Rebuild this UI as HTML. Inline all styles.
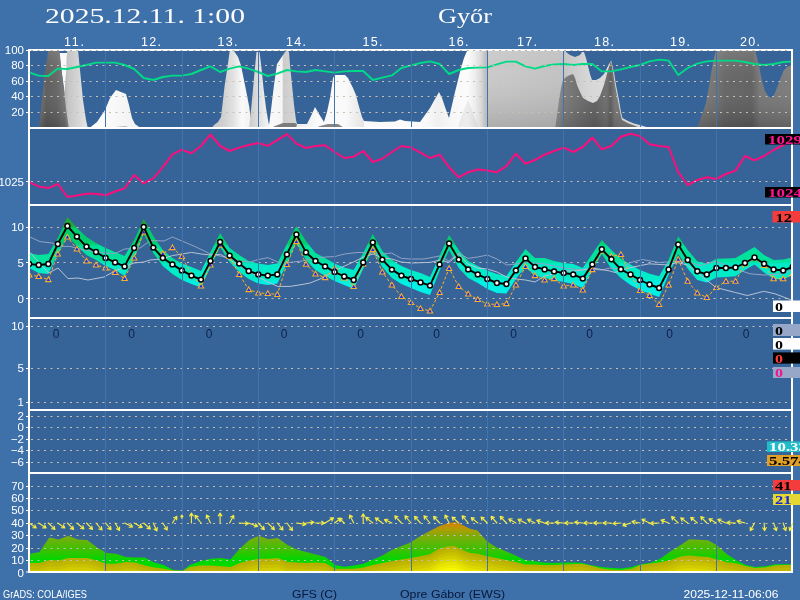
<!DOCTYPE html>
<html lang="hu"><head><meta charset="utf-8"><title>Győr meteogram</title>
<style>html,body{margin:0;padding:0;background:#3e70aa;overflow:hidden}svg{display:block}text{font-family:"Liberation Sans",sans-serif}.ser{font-family:"Liberation Serif",serif}</style>
</head><body>
<svg width="800" height="600" viewBox="0 0 800 600" style="will-change:transform">
<rect width="800" height="600" fill="#3e70aa"/>
<rect x="29" y="50" width="763" height="522" fill="#366498"/>
<defs>
<clipPath id="cp1"><rect x="30" y="51" width="761" height="77"/></clipPath>
<clipPath id="cp3"><rect x="30" y="206" width="761" height="112"/></clipPath>
<clipPath id="cp6"><rect x="30" y="474" width="761" height="97"/></clipPath>
</defs>
<line x1="31" y1="227.5" x2="790" y2="227.5" stroke="#c8c0b2" stroke-width="1" stroke-dasharray="2 4.5"/>
<line x1="26" y1="227.5" x2="29" y2="227.5" stroke="#fff" stroke-width="1"/>
<text x="24" y="231.2" font-size="11.5" fill="#fff" text-anchor="end">10</text>
<line x1="31" y1="262.5" x2="790" y2="262.5" stroke="#c8c0b2" stroke-width="1" stroke-dasharray="2 4.5"/>
<line x1="26" y1="262.5" x2="29" y2="262.5" stroke="#fff" stroke-width="1"/>
<text x="24" y="266.9" font-size="11.5" fill="#fff" text-anchor="end">5</text>
<line x1="31" y1="298.5" x2="790" y2="298.5" stroke="#c8c0b2" stroke-width="1" stroke-dasharray="2 4.5"/>
<line x1="26" y1="298.5" x2="29" y2="298.5" stroke="#fff" stroke-width="1"/>
<text x="24" y="302.6" font-size="11.5" fill="#fff" text-anchor="end">0</text>
<defs><linearGradient id="gv" gradientUnits="userSpaceOnUse" x1="0" y1="50" x2="0" y2="128"><stop offset="0" stop-color="#fff" stop-opacity="0.13"/><stop offset="0.45" stop-color="#888" stop-opacity="0"/><stop offset="1" stop-color="#000" stop-opacity="0.24"/></linearGradient><linearGradient id="gv2" gradientUnits="userSpaceOnUse" x1="0" y1="50" x2="0" y2="128"><stop offset="0" stop-color="#fff" stop-opacity="0.10"/><stop offset="0.5" stop-color="#888" stop-opacity="0"/><stop offset="1" stop-color="#000" stop-opacity="0.17"/></linearGradient><linearGradient id="gv3" gradientUnits="userSpaceOnUse" x1="0" y1="50" x2="0" y2="128"><stop offset="0" stop-color="#fff" stop-opacity="0.04"/><stop offset="0.3" stop-color="#888" stop-opacity="0"/><stop offset="1" stop-color="#000" stop-opacity="0.15"/></linearGradient></defs>
<g clip-path="url(#cp1)">
<linearGradient id="gc3" gradientUnits="userSpaceOnUse" x1="62" y1="0" x2="88" y2="0"><stop offset="0" stop-color="rgb(168,168,168)"/><stop offset="0.25" stop-color="rgb(198,198,198)"/><stop offset="0.6" stop-color="rgb(212,212,212)"/><stop offset="1" stop-color="rgb(230,230,230)"/></linearGradient>
<polygon points="67.0,50.0 78.0,50.0 80.0,70.0 83.0,100.0 86.0,120.0 88.0,129.0 62.0,129.0 63.0,100.0 65.0,80.0" fill="url(#gc3)" />
<polygon points="59.0,53.0 67.0,53.0 66.3,70.0 64.5,92.0 62.5,78.0 61.0,66.0" fill="#fafafa" />
<linearGradient id="gc1" gradientUnits="userSpaceOnUse" x1="39" y1="0" x2="69" y2="0"><stop offset="0" stop-color="rgb(122,122,122)"/><stop offset="0.25" stop-color="rgb(96,96,96)"/><stop offset="0.6" stop-color="rgb(104,104,104)"/><stop offset="0.85" stop-color="rgb(122,122,122)"/><stop offset="1" stop-color="rgb(160,160,160)"/></linearGradient>
<polygon points="39.0,129.0 41.0,110.0 44.0,80.0 48.0,52.0 49.0,50.0 59.5,50.0 61.0,66.0 62.5,78.0 64.5,95.0 66.5,112.0 69.0,129.0" fill="url(#gc1)" />
<polygon points="39.0,129.0 41.0,110.0 44.0,80.0 48.0,52.0 49.0,50.0 59.5,50.0 61.0,66.0 62.5,78.0 64.5,95.0 66.5,112.0 69.0,129.0" fill="url(#gv)" />
<linearGradient id="gc4" gradientUnits="userSpaceOnUse" x1="88" y1="0" x2="142" y2="0"><stop offset="0" stop-color="rgb(255,255,255)"/><stop offset="0.5" stop-color="rgb(248,248,248)"/><stop offset="1" stop-color="rgb(240,240,240)"/></linearGradient>
<polygon points="88.0,129.0 92.0,126.0 97.0,122.0 101.0,116.0 105.0,110.0 110.0,98.0 116.0,90.0 121.0,92.0 126.0,94.0 129.0,105.0 132.0,118.0 135.0,124.0 142.0,129.0" fill="url(#gc4)" />
<polygon points="108.0,129.0 115.0,127.0 125.0,126.0 135.0,129.0" fill="#b4b4b4" />
<linearGradient id="gc5" gradientUnits="userSpaceOnUse" x1="211" y1="0" x2="252" y2="0"><stop offset="0" stop-color="rgb(198,198,198)"/><stop offset="0.3" stop-color="rgb(208,208,208)"/><stop offset="0.55" stop-color="rgb(226,226,226)"/><stop offset="0.75" stop-color="rgb(250,250,250)"/><stop offset="1" stop-color="rgb(240,240,240)"/></linearGradient>
<polygon points="211.0,129.0 214.0,125.0 218.0,122.0 221.0,117.0 223.0,100.0 224.6,86.0 227.7,65.6 229.7,51.0 234.0,51.0 238.0,57.0 241.0,65.6 245.2,86.0 249.3,107.0 250.4,116.0 253.0,129.0" fill="url(#gc5)" />
<linearGradient id="gc5b" gradientUnits="userSpaceOnUse" x1="250" y1="0" x2="270" y2="0"><stop offset="0" stop-color="rgb(205,205,205)"/><stop offset="0.5" stop-color="rgb(225,225,225)"/><stop offset="1" stop-color="rgb(248,248,248)"/></linearGradient>
<polygon points="249.0,129.0 250.4,116.0 252.5,95.0 254.5,72.0 256.5,52.0 259.5,52.0 261.5,68.0 263.5,88.0 266.0,108.0 268.0,120.0 269.0,125.0 270.0,129.0" fill="url(#gc5b)" />
<linearGradient id="gc5c" gradientUnits="userSpaceOnUse" x1="269" y1="0" x2="298" y2="0"><stop offset="0" stop-color="rgb(250,250,250)"/><stop offset="0.45" stop-color="rgb(245,245,245)"/><stop offset="0.5" stop-color="rgb(205,205,205)"/><stop offset="1" stop-color="rgb(215,215,215)"/></linearGradient>
<polygon points="268.0,129.0 269.0,125.0 271.0,110.0 274.0,85.0 277.0,64.0 281.0,58.0 285.0,52.0 287.0,50.0 289.0,52.0 290.0,65.0 292.0,85.0 294.0,105.0 296.0,120.0 297.0,124.0 300.0,129.0" fill="url(#gc5c)" />
<polygon points="269.0,129.0 275.0,126.0 283.0,123.0 295.0,123.0 299.0,126.0 303.0,129.0" fill="#7c7c7c" />
<linearGradient id="gc5d" gradientUnits="userSpaceOnUse" x1="297" y1="0" x2="366" y2="0"><stop offset="0" stop-color="rgb(235,235,235)"/><stop offset="0.3" stop-color="rgb(250,250,250)"/><stop offset="0.7" stop-color="rgb(250,250,250)"/><stop offset="1" stop-color="rgb(225,225,225)"/></linearGradient>
<polygon points="296.0,129.0 297.0,124.0 307.0,124.0 311.0,116.0 315.0,107.0 319.0,114.0 324.0,122.0 327.0,112.0 330.0,98.0 333.0,78.0 335.0,75.0 345.0,75.0 348.0,78.0 350.0,82.0 353.0,88.0 356.0,95.0 358.0,103.0 360.0,110.0 362.0,117.0 364.0,121.0 366.0,129.0" fill="url(#gc5d)" />
<polygon points="313.0,129.0 320.0,126.0 328.0,124.0 338.0,124.0 342.0,126.5 346.0,129.0" fill="#858585" />
<linearGradient id="gc5e" gradientUnits="userSpaceOnUse" x1="364" y1="0" x2="487" y2="0"><stop offset="0" stop-color="rgb(250,250,250)"/><stop offset="0.5" stop-color="rgb(250,250,250)"/><stop offset="0.6" stop-color="rgb(240,240,240)"/><stop offset="0.7" stop-color="rgb(246,246,246)"/><stop offset="0.84" stop-color="rgb(252,252,252)"/><stop offset="0.9" stop-color="rgb(238,238,238)"/><stop offset="0.95" stop-color="rgb(218,218,218)"/><stop offset="0.985" stop-color="rgb(192,192,192)"/><stop offset="1" stop-color="rgb(186,186,186)"/></linearGradient>
<polygon points="364.0,129.0 364.0,121.0 380.0,122.0 395.0,121.5 400.0,119.5 405.0,121.0 420.0,122.0 425.0,115.0 430.0,108.0 435.0,99.0 439.0,92.0 442.0,98.0 445.0,107.0 449.0,118.0 452.0,105.0 455.0,92.0 458.0,80.0 461.0,68.0 464.0,58.0 467.0,51.0 468.0,50.0 488.0,50.0 488.0,129.0" fill="url(#gc5e)" />
<polygon points="457.0,129.0 461.0,118.0 465.0,107.0 468.0,100.0 472.0,110.0 476.0,121.0 479.5,129.0" fill="#808080" opacity="0.13"/>
<linearGradient id="gc6" gradientUnits="userSpaceOnUse" x1="487" y1="0" x2="565" y2="0"><stop offset="0" stop-color="rgb(203,203,203)"/><stop offset="1" stop-color="rgb(194,194,194)"/></linearGradient>
<polygon points="487.0,50.0 566.0,50.0 566.0,129.0 487.0,129.0" fill="url(#gc6)" />
<polygon points="487.0,50.0 566.0,50.0 566.0,129.0 487.0,129.0" fill="url(#gv3)" />
<linearGradient id="gc7" gradientUnits="userSpaceOnUse" x1="563" y1="0" x2="612" y2="0"><stop offset="0" stop-color="rgb(196,196,196)"/><stop offset="0.5" stop-color="rgb(214,214,214)"/><stop offset="1" stop-color="rgb(222,222,222)"/></linearGradient>
<polygon points="563.0,50.0 566.0,52.0 570.0,55.0 575.0,57.0 580.0,55.0 582.0,52.0 584.0,52.0 586.0,58.0 588.0,66.0 590.0,74.0 592.0,80.0 596.0,80.0 600.0,78.0 604.0,74.0 607.0,68.0 609.0,64.0 611.0,61.0 613.0,72.0 613.0,110.0 563.0,110.0" fill="url(#gc7)" />
<polygon points="611.0,60.0 614.0,72.0 616.0,85.0 619.0,100.0 621.0,112.0 622.5,118.0 628.0,121.0 634.0,123.5 640.0,125.0 648.0,127.5 648.0,129.0 611.0,129.0" fill="#d4d4d4" />
<linearGradient id="gc8" gradientUnits="userSpaceOnUse" x1="555" y1="0" x2="650" y2="0"><stop offset="0" stop-color="rgb(148,148,148)"/><stop offset="0.1" stop-color="rgb(125,125,125)"/><stop offset="0.25" stop-color="rgb(112,112,112)"/><stop offset="0.42" stop-color="rgb(100,100,100)"/><stop offset="0.54" stop-color="rgb(114,114,114)"/><stop offset="0.585" stop-color="rgb(96,96,96)"/><stop offset="0.63" stop-color="rgb(122,122,122)"/><stop offset="0.72" stop-color="rgb(128,128,128)"/><stop offset="1" stop-color="rgb(128,128,128)"/></linearGradient>
<polygon points="555.0,129.0 557.0,115.0 559.0,100.0 561.0,88.0 563.0,80.0 566.0,77.0 570.0,75.0 573.0,74.0 575.0,78.0 577.0,85.0 580.0,92.0 583.0,98.0 588.0,101.0 593.0,103.0 597.0,101.0 600.0,96.0 604.0,85.0 608.0,70.0 611.0,61.0 613.0,72.0 615.0,85.0 618.0,101.0 620.5,114.0 622.0,120.0 628.0,123.2 634.0,125.6 639.0,127.6 640.0,129.0" fill="url(#gc8)" />
<polygon points="555.0,129.0 557.0,115.0 559.0,100.0 561.0,88.0 563.0,80.0 566.0,77.0 570.0,75.0 573.0,74.0 575.0,78.0 577.0,85.0 580.0,92.0 583.0,98.0 588.0,101.0 593.0,103.0 597.0,101.0 600.0,96.0 604.0,85.0 608.0,70.0 611.0,61.0 613.0,72.0 615.0,85.0 618.0,101.0 620.5,114.0 622.0,120.0 628.0,123.2 634.0,125.6 639.0,127.6 640.0,129.0" fill="url(#gv2)" />
<linearGradient id="gc9" gradientUnits="userSpaceOnUse" x1="697" y1="0" x2="792" y2="0"><stop offset="0" stop-color="rgb(128,128,128)"/><stop offset="0.2" stop-color="rgb(116,116,116)"/><stop offset="0.3" stop-color="rgb(104,104,104)"/><stop offset="0.58" stop-color="rgb(100,100,100)"/><stop offset="0.66" stop-color="rgb(122,122,122)"/><stop offset="0.8" stop-color="rgb(124,124,124)"/><stop offset="1" stop-color="rgb(126,126,126)"/></linearGradient>
<polygon points="697.0,129.0 700.0,120.0 703.0,112.0 706.0,103.0 708.0,92.0 710.0,80.0 712.0,68.0 714.0,58.0 716.0,50.0 755.0,50.0 757.0,58.0 759.0,66.0 761.0,76.0 763.0,84.0 765.0,91.0 768.0,96.0 772.0,98.0 775.0,93.0 778.0,85.0 781.0,77.0 784.0,70.0 787.0,67.0 792.0,65.0 792.0,129.0" fill="url(#gc9)" />
<polygon points="697.0,129.0 700.0,120.0 703.0,112.0 706.0,103.0 708.0,92.0 710.0,80.0 712.0,68.0 714.0,58.0 716.0,50.0 755.0,50.0 757.0,58.0 759.0,66.0 761.0,76.0 763.0,84.0 765.0,91.0 768.0,96.0 772.0,98.0 775.0,93.0 778.0,85.0 781.0,77.0 784.0,70.0 787.0,67.0 792.0,65.0 792.0,129.0" fill="url(#gv)" />
</g>
<g clip-path="url(#cp1)">
<polyline points="29.2,72.6 38.7,75.6 48.3,76.0 57.8,68.6 67.4,69.0 76.9,67.0 86.5,65.0 96.0,62.6 105.6,62.6 115.1,62.6 124.6,65.0 134.2,69.0 143.7,78.0 153.3,80.0 162.8,77.0 172.4,75.6 181.9,75.6 191.4,74.0 201.0,70.0 210.5,66.4 220.1,72.0 229.6,68.6 239.2,66.4 248.7,68.6 258.3,72.0 267.8,76.0 277.3,73.6 286.9,70.0 296.4,71.4 306.0,72.0 315.5,70.0 325.1,71.4 334.6,72.6 344.2,71.4 353.7,71.0 363.2,71.0 372.8,80.0 382.3,77.6 391.9,75.4 401.4,68.0 411.0,65.4 420.5,63.0 430.0,61.4 439.6,64.0 449.1,74.0 458.7,70.0 468.2,68.0 477.8,67.6 487.3,67.4 496.9,64.4 506.4,61.6 515.9,61.6 525.5,66.4 535.0,68.6 544.6,66.0 554.1,64.4 563.7,64.0 573.2,65.0 582.8,64.0 592.3,64.0 601.8,71.4 611.4,71.4 620.9,69.4 630.5,67.0 640.0,65.0 649.6,61.4 659.1,59.6 668.6,60.6 678.2,75.0 687.7,68.0 697.3,63.6 706.8,61.4 716.4,60.6 725.9,60.6 735.5,60.6 745.0,62.0 754.5,64.0 764.1,65.0 773.6,64.0 783.2,62.0 792.7,61.6" fill="none" stroke="#00da87" stroke-width="1.9" stroke-linejoin="round" />
</g>
<polyline points="29.2,182.4 38.7,186.4 48.3,188.1 57.8,184.0 67.4,196.9 76.9,195.5 86.5,193.8 96.0,193.8 105.6,195.2 115.1,191.5 124.6,188.4 134.2,175.0 143.7,183.4 153.3,178.3 162.8,167.2 172.4,154.4 181.9,149.6 191.4,153.3 201.0,146.0 210.5,134.5 220.1,146.0 229.6,151.0 239.2,147.6 248.7,145.0 258.3,143.0 267.8,145.9 277.3,140.2 286.9,134.1 296.4,143.6 306.0,148.0 315.5,146.0 325.1,145.2 334.6,152.0 344.2,158.0 353.7,156.7 363.2,151.0 372.8,162.0 382.3,158.7 391.9,152.0 401.4,146.0 411.0,147.6 420.5,152.7 430.0,158.0 439.6,154.7 449.1,167.2 458.7,177.3 468.2,172.2 477.8,169.5 487.3,170.6 496.9,172.2 506.4,166.2 515.9,153.7 525.5,163.8 535.0,160.0 544.6,154.7 554.1,151.0 563.7,147.6 573.2,152.0 582.8,147.0 592.3,137.5 601.8,149.3 611.4,146.0 620.9,136.8 630.5,133.8 640.0,136.1 649.6,144.2 659.1,146.0 668.6,147.0 678.2,172.2 687.7,185.0 697.3,180.0 706.8,177.3 716.4,179.0 725.9,174.0 735.5,170.6 745.0,156.0 754.5,160.4 764.1,156.0 773.6,150.0 783.2,145.0 792.7,140.0" fill="none" stroke="#fa0f7d" stroke-width="2" stroke-linejoin="round" />
<defs><linearGradient id="gband" gradientUnits="userSpaceOnUse" x1="0" y1="210.0" x2="0" y2="300.0"><stop offset="0.0000" stop-color="#1eaa32"/><stop offset="0.1778" stop-color="#1eaa32"/><stop offset="0.2056" stop-color="#00cd6e"/><stop offset="0.3722" stop-color="#00cd6e"/><stop offset="0.4056" stop-color="#00e19b"/><stop offset="0.5667" stop-color="#00e19b"/><stop offset="0.6056" stop-color="#00ebc8"/><stop offset="0.7667" stop-color="#00ebc8"/><stop offset="0.8000" stop-color="#00f0e6"/><stop offset="1.0000" stop-color="#00f0e6"/></linearGradient></defs>
<g clip-path="url(#cp3)">
<polygon points="29.2,253.0 38.7,255.0 48.3,254.0 57.8,238.0 67.4,217.0 76.9,228.0 86.5,237.0 96.0,243.0 105.6,248.0 115.1,252.0 124.6,256.0 134.2,240.0 143.7,219.0 153.3,236.0 162.8,250.0 172.4,258.0 181.9,263.6 191.4,267.0 201.0,271.0 210.5,252.0 220.1,233.0 229.6,248.0 239.2,255.0 248.7,261.0 258.3,263.6 267.8,265.0 277.3,263.6 286.9,244.0 296.4,226.0 306.0,241.0 315.5,253.0 325.1,258.0 334.6,263.6 344.2,267.6 353.7,270.0 363.2,253.0 372.8,234.0 382.3,251.0 391.9,260.0 401.4,266.0 411.0,270.0 420.5,273.0 430.0,277.0 439.6,256.0 449.1,235.0 458.7,250.0 468.2,261.0 477.8,266.0 487.3,270.4 496.9,274.0 506.4,276.0 515.9,262.0 525.5,249.0 535.0,258.0 544.6,258.0 554.1,261.0 563.7,263.0 573.2,264.0 582.8,268.0 592.3,254.0 601.8,240.0 611.4,250.0 620.9,258.8 630.5,264.5 640.0,270.0 649.6,273.8 659.1,276.3 668.6,260.0 678.2,236.3 687.7,250.0 697.3,261.3 706.8,263.8 716.4,258.8 725.9,258.4 735.5,258.0 745.0,252.5 754.5,247.0 764.1,255.0 773.6,260.0 783.2,259.5 792.7,257.5 792.7,275.0 783.2,279.5 773.6,278.8 764.1,272.5 754.5,264.5 745.0,270.0 735.5,276.3 725.9,277.0 716.4,277.5 706.8,282.5 697.3,280.0 687.7,268.8 678.2,253.8 668.6,275.0 659.1,297.0 649.6,293.8 640.0,290.0 630.5,285.0 620.9,278.0 611.4,268.8 601.8,254.0 592.3,270.0 582.8,288.0 573.2,284.0 563.7,282.0 554.1,280.0 544.6,278.0 535.0,275.6 525.5,267.0 515.9,279.0 506.4,293.6 496.9,293.0 487.3,289.0 477.8,283.0 468.2,278.0 458.7,268.0 449.1,250.0 439.6,271.0 430.0,295.0 420.5,292.0 411.0,288.0 401.4,284.0 391.9,278.0 382.3,267.0 372.8,249.0 363.2,269.0 353.7,289.0 344.2,285.0 334.6,281.0 325.1,276.0 315.5,270.0 306.0,260.0 296.4,242.0 286.9,264.0 277.3,283.6 267.8,285.0 258.3,283.6 248.7,279.0 239.2,272.0 229.6,262.0 220.1,247.0 210.5,267.0 201.0,287.5 191.4,284.0 181.9,280.0 172.4,274.0 162.8,266.0 153.3,253.0 143.7,234.0 134.2,258.0 124.6,276.0 115.1,270.0 105.6,266.0 96.0,260.0 86.5,255.0 76.9,246.0 67.4,236.0 57.8,254.0 48.3,274.0 38.7,273.0 29.2,268.0" fill="url(#gband)" />
<polyline points="30.0,237.0 40.0,241.6 52.0,243.0 60.0,246.4 70.0,246.4 80.0,249.0 96.0,252.0 105.4,253.0 115.0,253.6 124.4,249.0 140.0,248.0 150.0,241.0 153.0,240.5 164.0,241.0 172.4,237.0 182.0,241.0 196.0,247.0 210.6,254.0 220.4,256.0 230.0,258.0 239.4,261.0 250.0,262.0 258.4,259.6 268.0,257.6 277.6,262.0 290.0,262.4 302.0,261.0 312.0,259.0 325.0,257.0 334.6,256.6 344.4,254.0 358.0,252.4 373.0,253.0 382.4,254.0 391.6,253.0 401.4,258.4 411.0,259.0 424.0,259.0 439.6,256.0 449.0,261.0 458.4,253.0 468.0,258.4 477.6,257.0 487.4,255.0 497.0,259.0 506.6,265.0 516.0,264.0 525.6,262.0 544.6,264.0 564.0,268.0 582.6,270.0 592.4,269.0 601.6,270.0 610.0,268.0 620.0,268.8 630.5,262.5 642.5,259.5 658.8,262.5 677.8,261.3 687.3,261.3 700.0,265.5 716.0,261.3 735.3,268.8 750.0,273.8 763.8,275.0 782.8,273.8 791.3,270.0" fill="none" stroke="#8fa3c5" stroke-width="1" stroke-linejoin="round" />
<polyline points="30.0,252.4 48.6,273.0 58.0,268.0 68.0,278.6 78.0,278.0 88.0,280.0 104.0,277.0 115.0,271.0 124.4,267.0 134.0,263.0 144.0,262.0 150.0,260.0 162.0,259.0 172.4,255.6 182.0,254.0 191.6,252.4 201.4,254.0 210.6,255.0 220.4,254.4 230.0,260.0 240.0,266.0 248.8,271.0 258.4,277.0 268.0,282.0 277.6,286.4 290.0,286.4 302.0,284.5 310.0,283.0 320.0,279.0 334.6,271.0 344.4,266.0 353.6,262.0 363.4,257.0 373.0,254.0 382.4,258.0 391.6,259.0 401.4,262.0 411.0,263.0 430.0,262.4 440.0,260.0 449.0,262.4 458.4,254.0 468.0,264.0 477.6,268.0 487.4,269.0 497.0,272.0 506.6,277.0 516.0,279.0 525.6,280.0 535.0,282.0 544.6,276.0 554.0,274.0 564.0,271.0 573.4,271.0 582.6,270.0 592.4,268.0 610.0,271.0 615.0,272.5 630.5,267.5 649.3,263.8 668.3,265.0 677.8,262.5 687.3,265.0 700.0,275.0 716.0,287.5 735.3,292.5 747.5,295.5 763.8,291.3 775.0,293.8 791.3,300.0" fill="none" stroke="#b8c2d4" stroke-width="1" stroke-linejoin="round" />
<polyline points="29.2,275.0 38.7,276.4 48.3,279.6 57.8,254.0 67.4,237.0 76.9,249.0 86.5,261.0 96.0,265.0 105.6,268.0 115.1,272.4 124.6,278.4 134.2,258.0 143.7,232.0 153.3,246.0 162.8,253.6 172.4,247.6 181.9,256.4 191.4,275.0 201.0,286.0 210.5,265.0 220.1,245.0 229.6,256.4 239.2,274.4 248.7,289.6 258.3,293.0 267.8,293.4 277.3,294.4 286.9,264.4 296.4,241.6 306.0,264.2 315.5,274.0 325.1,277.6 334.6,268.0 344.2,278.0 353.7,286.4 363.2,264.0 372.8,249.6 382.3,272.0 391.9,285.0 401.4,296.4 411.0,302.4 420.5,308.4 430.0,311.0 439.6,292.4 449.1,268.4 458.7,286.4 468.2,294.0 477.8,299.4 487.3,304.0 496.9,304.4 506.4,303.6 515.9,285.0 525.5,266.4 535.0,275.6 544.6,280.0 554.1,278.6 563.7,286.0 573.2,285.0 582.8,290.0 592.3,269.6 601.8,251.0 611.4,256.3 620.9,254.5 630.5,275.0 640.0,290.5 649.6,295.5 659.1,304.5 668.6,285.0 678.2,259.3 687.7,281.3 697.3,293.0 706.8,297.5 716.4,287.5 725.9,281.3 735.5,281.3 745.0,263.8 754.5,258.0 764.1,265.5 773.6,278.8 783.2,278.8 792.7,273.8" fill="none" stroke="#faaf28" stroke-width="1" stroke-linejoin="round" stroke-dasharray="3 2"/>
<polygon points="29.2,272.3 26.5,277.0 31.9,277.0" fill="#1428f0" stroke="#faaf28" stroke-width="1.05"/>
<polygon points="38.7,273.7 36.0,278.4 41.4,278.4" fill="#1428f0" stroke="#faaf28" stroke-width="1.05"/>
<polygon points="48.3,276.9 45.6,281.6 51.0,281.6" fill="#1428f0" stroke="#faaf28" stroke-width="1.05"/>
<polygon points="57.8,251.3 55.1,256.0 60.5,256.0" fill="#1428f0" stroke="#faaf28" stroke-width="1.05"/>
<polygon points="67.4,234.3 64.7,239.0 70.1,239.0" fill="#1428f0" stroke="#faaf28" stroke-width="1.05"/>
<polygon points="76.9,246.3 74.2,251.0 79.6,251.0" fill="#1428f0" stroke="#faaf28" stroke-width="1.05"/>
<polygon points="86.5,258.3 83.8,263.0 89.2,263.0" fill="#1428f0" stroke="#faaf28" stroke-width="1.05"/>
<polygon points="96.0,262.3 93.3,267.0 98.7,267.0" fill="#1428f0" stroke="#faaf28" stroke-width="1.05"/>
<polygon points="105.6,265.3 102.9,270.0 108.3,270.0" fill="#1428f0" stroke="#faaf28" stroke-width="1.05"/>
<polygon points="115.1,269.7 112.4,274.4 117.8,274.4" fill="#1428f0" stroke="#faaf28" stroke-width="1.05"/>
<polygon points="124.6,275.7 121.9,280.4 127.3,280.4" fill="#1428f0" stroke="#faaf28" stroke-width="1.05"/>
<polygon points="134.2,255.3 131.5,260.0 136.9,260.0" fill="#1428f0" stroke="#faaf28" stroke-width="1.05"/>
<polygon points="143.7,229.3 141.0,234.0 146.4,234.0" fill="#1428f0" stroke="#faaf28" stroke-width="1.05"/>
<polygon points="162.8,250.9 160.1,255.6 165.5,255.6" fill="#1428f0" stroke="#faaf28" stroke-width="1.05"/>
<polygon points="172.4,244.9 169.7,249.6 175.1,249.6" fill="#1428f0" stroke="#faaf28" stroke-width="1.05"/>
<polygon points="181.9,253.7 179.2,258.4 184.6,258.4" fill="#1428f0" stroke="#faaf28" stroke-width="1.05"/>
<polygon points="191.4,272.3 188.7,277.0 194.1,277.0" fill="#1428f0" stroke="#faaf28" stroke-width="1.05"/>
<polygon points="201.0,283.3 198.3,288.0 203.7,288.0" fill="#1428f0" stroke="#faaf28" stroke-width="1.05"/>
<polygon points="210.5,262.3 207.8,267.0 213.2,267.0" fill="#1428f0" stroke="#faaf28" stroke-width="1.05"/>
<polygon points="220.1,242.3 217.4,247.0 222.8,247.0" fill="#1428f0" stroke="#faaf28" stroke-width="1.05"/>
<polygon points="229.6,253.7 226.9,258.4 232.3,258.4" fill="#1428f0" stroke="#faaf28" stroke-width="1.05"/>
<polygon points="239.2,271.7 236.5,276.4 241.9,276.4" fill="#1428f0" stroke="#faaf28" stroke-width="1.05"/>
<polygon points="248.7,286.9 246.0,291.6 251.4,291.6" fill="#1428f0" stroke="#faaf28" stroke-width="1.05"/>
<polygon points="258.3,290.3 255.6,295.0 261.0,295.0" fill="#1428f0" stroke="#faaf28" stroke-width="1.05"/>
<polygon points="267.8,290.7 265.1,295.4 270.5,295.4" fill="#1428f0" stroke="#faaf28" stroke-width="1.05"/>
<polygon points="277.3,291.7 274.6,296.4 280.0,296.4" fill="#1428f0" stroke="#faaf28" stroke-width="1.05"/>
<polygon points="286.9,261.7 284.2,266.4 289.6,266.4" fill="#1428f0" stroke="#faaf28" stroke-width="1.05"/>
<polygon points="296.4,238.9 293.7,243.6 299.1,243.6" fill="#1428f0" stroke="#faaf28" stroke-width="1.05"/>
<polygon points="306.0,261.5 303.3,266.2 308.7,266.2" fill="#1428f0" stroke="#faaf28" stroke-width="1.05"/>
<polygon points="315.5,271.3 312.8,276.0 318.2,276.0" fill="#1428f0" stroke="#faaf28" stroke-width="1.05"/>
<polygon points="325.1,274.9 322.4,279.6 327.8,279.6" fill="#1428f0" stroke="#faaf28" stroke-width="1.05"/>
<polygon points="334.6,265.3 331.9,270.0 337.3,270.0" fill="#1428f0" stroke="#faaf28" stroke-width="1.05"/>
<polygon points="344.2,275.3 341.5,280.0 346.9,280.0" fill="#1428f0" stroke="#faaf28" stroke-width="1.05"/>
<polygon points="353.7,283.7 351.0,288.4 356.4,288.4" fill="#1428f0" stroke="#faaf28" stroke-width="1.05"/>
<polygon points="363.2,261.3 360.5,266.0 365.9,266.0" fill="#1428f0" stroke="#faaf28" stroke-width="1.05"/>
<polygon points="372.8,246.9 370.1,251.6 375.5,251.6" fill="#1428f0" stroke="#faaf28" stroke-width="1.05"/>
<polygon points="382.3,269.3 379.6,274.0 385.0,274.0" fill="#1428f0" stroke="#faaf28" stroke-width="1.05"/>
<polygon points="391.9,282.3 389.2,287.0 394.6,287.0" fill="#1428f0" stroke="#faaf28" stroke-width="1.05"/>
<polygon points="401.4,293.7 398.7,298.4 404.1,298.4" fill="#1428f0" stroke="#faaf28" stroke-width="1.05"/>
<polygon points="411.0,299.7 408.3,304.4 413.7,304.4" fill="#1428f0" stroke="#faaf28" stroke-width="1.05"/>
<polygon points="420.5,305.7 417.8,310.4 423.2,310.4" fill="#1428f0" stroke="#faaf28" stroke-width="1.05"/>
<polygon points="430.0,308.3 427.3,313.0 432.7,313.0" fill="#1428f0" stroke="#faaf28" stroke-width="1.05"/>
<polygon points="439.6,289.7 436.9,294.4 442.3,294.4" fill="#1428f0" stroke="#faaf28" stroke-width="1.05"/>
<polygon points="449.1,265.7 446.4,270.4 451.8,270.4" fill="#1428f0" stroke="#faaf28" stroke-width="1.05"/>
<polygon points="458.7,283.7 456.0,288.4 461.4,288.4" fill="#1428f0" stroke="#faaf28" stroke-width="1.05"/>
<polygon points="468.2,291.3 465.5,296.0 470.9,296.0" fill="#1428f0" stroke="#faaf28" stroke-width="1.05"/>
<polygon points="477.8,296.7 475.1,301.4 480.5,301.4" fill="#1428f0" stroke="#faaf28" stroke-width="1.05"/>
<polygon points="487.3,301.3 484.6,306.0 490.0,306.0" fill="#1428f0" stroke="#faaf28" stroke-width="1.05"/>
<polygon points="496.9,301.7 494.2,306.4 499.6,306.4" fill="#1428f0" stroke="#faaf28" stroke-width="1.05"/>
<polygon points="506.4,300.9 503.7,305.6 509.1,305.6" fill="#1428f0" stroke="#faaf28" stroke-width="1.05"/>
<polygon points="515.9,282.3 513.2,287.0 518.6,287.0" fill="#1428f0" stroke="#faaf28" stroke-width="1.05"/>
<polygon points="525.5,263.7 522.8,268.4 528.2,268.4" fill="#1428f0" stroke="#faaf28" stroke-width="1.05"/>
<polygon points="535.0,272.9 532.3,277.6 537.7,277.6" fill="#1428f0" stroke="#faaf28" stroke-width="1.05"/>
<polygon points="544.6,277.3 541.9,282.0 547.3,282.0" fill="#1428f0" stroke="#faaf28" stroke-width="1.05"/>
<polygon points="554.1,275.9 551.4,280.6 556.8,280.6" fill="#1428f0" stroke="#faaf28" stroke-width="1.05"/>
<polygon points="563.7,283.3 561.0,288.0 566.4,288.0" fill="#1428f0" stroke="#faaf28" stroke-width="1.05"/>
<polygon points="573.2,282.3 570.5,287.0 575.9,287.0" fill="#1428f0" stroke="#faaf28" stroke-width="1.05"/>
<polygon points="582.8,287.3 580.1,292.0 585.5,292.0" fill="#1428f0" stroke="#faaf28" stroke-width="1.05"/>
<polygon points="592.3,266.9 589.6,271.6 595.0,271.6" fill="#1428f0" stroke="#faaf28" stroke-width="1.05"/>
<polygon points="601.8,248.3 599.1,253.0 604.5,253.0" fill="#1428f0" stroke="#faaf28" stroke-width="1.05"/>
<polygon points="611.4,253.6 608.7,258.3 614.1,258.3" fill="#1428f0" stroke="#faaf28" stroke-width="1.05"/>
<polygon points="620.9,251.8 618.2,256.5 623.6,256.5" fill="#1428f0" stroke="#faaf28" stroke-width="1.05"/>
<polygon points="630.5,272.3 627.8,277.0 633.2,277.0" fill="#1428f0" stroke="#faaf28" stroke-width="1.05"/>
<polygon points="640.0,287.8 637.3,292.5 642.7,292.5" fill="#1428f0" stroke="#faaf28" stroke-width="1.05"/>
<polygon points="649.6,292.8 646.9,297.5 652.3,297.5" fill="#1428f0" stroke="#faaf28" stroke-width="1.05"/>
<polygon points="659.1,301.8 656.4,306.5 661.8,306.5" fill="#1428f0" stroke="#faaf28" stroke-width="1.05"/>
<polygon points="668.6,282.3 665.9,287.0 671.3,287.0" fill="#1428f0" stroke="#faaf28" stroke-width="1.05"/>
<polygon points="678.2,256.6 675.5,261.3 680.9,261.3" fill="#1428f0" stroke="#faaf28" stroke-width="1.05"/>
<polygon points="687.7,278.6 685.0,283.3 690.4,283.3" fill="#1428f0" stroke="#faaf28" stroke-width="1.05"/>
<polygon points="697.3,290.3 694.6,295.0 700.0,295.0" fill="#1428f0" stroke="#faaf28" stroke-width="1.05"/>
<polygon points="706.8,294.8 704.1,299.5 709.5,299.5" fill="#1428f0" stroke="#faaf28" stroke-width="1.05"/>
<polygon points="716.4,284.8 713.7,289.5 719.1,289.5" fill="#1428f0" stroke="#faaf28" stroke-width="1.05"/>
<polygon points="725.9,278.6 723.2,283.3 728.6,283.3" fill="#1428f0" stroke="#faaf28" stroke-width="1.05"/>
<polygon points="735.5,278.6 732.8,283.3 738.2,283.3" fill="#1428f0" stroke="#faaf28" stroke-width="1.05"/>
<polygon points="745.0,261.1 742.3,265.8 747.7,265.8" fill="#1428f0" stroke="#faaf28" stroke-width="1.05"/>
<polygon points="754.5,255.3 751.8,260.0 757.2,260.0" fill="#1428f0" stroke="#faaf28" stroke-width="1.05"/>
<polygon points="764.1,262.8 761.4,267.5 766.8,267.5" fill="#1428f0" stroke="#faaf28" stroke-width="1.05"/>
<polygon points="773.6,276.1 770.9,280.8 776.3,280.8" fill="#1428f0" stroke="#faaf28" stroke-width="1.05"/>
<polygon points="783.2,276.1 780.5,280.8 785.9,280.8" fill="#1428f0" stroke="#faaf28" stroke-width="1.05"/>
<polygon points="792.7,271.1 790.0,275.8 795.4,275.8" fill="#1428f0" stroke="#faaf28" stroke-width="1.05"/>
<polyline points="29.2,264.0 38.7,265.0 48.3,264.0 57.8,244.0 67.4,226.0 76.9,236.6 86.5,246.6 96.0,252.0 105.6,258.0 115.1,262.4 124.6,266.4 134.2,248.0 143.7,227.0 153.3,247.6 162.8,258.0 172.4,264.4 181.9,270.4 191.4,275.6 201.0,279.6 210.5,261.0 220.1,242.0 229.6,255.6 239.2,263.6 248.7,271.0 258.3,274.4 267.8,275.6 277.3,274.4 286.9,254.4 296.4,234.4 306.0,252.4 315.5,261.0 325.1,266.4 334.6,272.0 344.2,276.4 353.7,280.0 363.2,262.4 372.8,242.4 382.3,259.6 391.9,269.6 401.4,275.6 411.0,279.0 420.5,282.4 430.0,285.6 439.6,264.4 449.1,243.4 458.7,259.6 468.2,269.4 477.8,274.4 487.3,279.0 496.9,283.0 506.4,284.0 515.9,270.4 525.5,258.4 535.0,267.0 544.6,269.4 554.1,271.4 563.7,273.0 573.2,274.4 582.8,278.6 592.3,264.4 601.8,249.3 611.4,259.3 620.9,269.3 630.5,274.5 640.0,280.0 649.6,284.5 659.1,288.0 668.6,269.5 678.2,244.5 687.7,260.0 697.3,271.3 706.8,274.5 716.4,268.0 725.9,268.0 735.5,267.5 745.0,263.0 754.5,257.5 764.1,263.8 773.6,269.5 783.2,270.5 792.7,267.0" fill="none" stroke="#000" stroke-width="1.9" stroke-linejoin="round" />
<circle cx="29.2" cy="264.0" r="2.45" fill="#fff" stroke="#000" stroke-width="1.5"/>
<circle cx="38.7" cy="265.0" r="2.45" fill="#fff" stroke="#000" stroke-width="1.5"/>
<circle cx="48.3" cy="264.0" r="2.45" fill="#fff" stroke="#000" stroke-width="1.5"/>
<circle cx="57.8" cy="244.0" r="2.45" fill="#fff" stroke="#000" stroke-width="1.5"/>
<circle cx="67.4" cy="226.0" r="2.45" fill="#fff" stroke="#000" stroke-width="1.5"/>
<circle cx="76.9" cy="236.6" r="2.45" fill="#fff" stroke="#000" stroke-width="1.5"/>
<circle cx="86.5" cy="246.6" r="2.45" fill="#fff" stroke="#000" stroke-width="1.5"/>
<circle cx="96.0" cy="252.0" r="2.45" fill="#fff" stroke="#000" stroke-width="1.5"/>
<circle cx="105.6" cy="258.0" r="2.45" fill="#fff" stroke="#000" stroke-width="1.5"/>
<circle cx="115.1" cy="262.4" r="2.45" fill="#fff" stroke="#000" stroke-width="1.5"/>
<circle cx="124.6" cy="266.4" r="2.45" fill="#fff" stroke="#000" stroke-width="1.5"/>
<circle cx="134.2" cy="248.0" r="2.45" fill="#fff" stroke="#000" stroke-width="1.5"/>
<circle cx="143.7" cy="227.0" r="2.45" fill="#fff" stroke="#000" stroke-width="1.5"/>
<circle cx="153.3" cy="247.6" r="2.45" fill="#fff" stroke="#000" stroke-width="1.5"/>
<circle cx="162.8" cy="258.0" r="2.45" fill="#fff" stroke="#000" stroke-width="1.5"/>
<circle cx="172.4" cy="264.4" r="2.45" fill="#fff" stroke="#000" stroke-width="1.5"/>
<circle cx="181.9" cy="270.4" r="2.45" fill="#fff" stroke="#000" stroke-width="1.5"/>
<circle cx="191.4" cy="275.6" r="2.45" fill="#fff" stroke="#000" stroke-width="1.5"/>
<circle cx="201.0" cy="279.6" r="2.45" fill="#fff" stroke="#000" stroke-width="1.5"/>
<circle cx="210.5" cy="261.0" r="2.45" fill="#fff" stroke="#000" stroke-width="1.5"/>
<circle cx="220.1" cy="242.0" r="2.45" fill="#fff" stroke="#000" stroke-width="1.5"/>
<circle cx="229.6" cy="255.6" r="2.45" fill="#fff" stroke="#000" stroke-width="1.5"/>
<circle cx="239.2" cy="263.6" r="2.45" fill="#fff" stroke="#000" stroke-width="1.5"/>
<circle cx="248.7" cy="271.0" r="2.45" fill="#fff" stroke="#000" stroke-width="1.5"/>
<circle cx="258.3" cy="274.4" r="2.45" fill="#fff" stroke="#000" stroke-width="1.5"/>
<circle cx="267.8" cy="275.6" r="2.45" fill="#fff" stroke="#000" stroke-width="1.5"/>
<circle cx="277.3" cy="274.4" r="2.45" fill="#fff" stroke="#000" stroke-width="1.5"/>
<circle cx="286.9" cy="254.4" r="2.45" fill="#fff" stroke="#000" stroke-width="1.5"/>
<circle cx="296.4" cy="234.4" r="2.45" fill="#fff" stroke="#000" stroke-width="1.5"/>
<circle cx="306.0" cy="252.4" r="2.45" fill="#fff" stroke="#000" stroke-width="1.5"/>
<circle cx="315.5" cy="261.0" r="2.45" fill="#fff" stroke="#000" stroke-width="1.5"/>
<circle cx="325.1" cy="266.4" r="2.45" fill="#fff" stroke="#000" stroke-width="1.5"/>
<circle cx="334.6" cy="272.0" r="2.45" fill="#fff" stroke="#000" stroke-width="1.5"/>
<circle cx="344.2" cy="276.4" r="2.45" fill="#fff" stroke="#000" stroke-width="1.5"/>
<circle cx="353.7" cy="280.0" r="2.45" fill="#fff" stroke="#000" stroke-width="1.5"/>
<circle cx="363.2" cy="262.4" r="2.45" fill="#fff" stroke="#000" stroke-width="1.5"/>
<circle cx="372.8" cy="242.4" r="2.45" fill="#fff" stroke="#000" stroke-width="1.5"/>
<circle cx="382.3" cy="259.6" r="2.45" fill="#fff" stroke="#000" stroke-width="1.5"/>
<circle cx="391.9" cy="269.6" r="2.45" fill="#fff" stroke="#000" stroke-width="1.5"/>
<circle cx="401.4" cy="275.6" r="2.45" fill="#fff" stroke="#000" stroke-width="1.5"/>
<circle cx="411.0" cy="279.0" r="2.45" fill="#fff" stroke="#000" stroke-width="1.5"/>
<circle cx="420.5" cy="282.4" r="2.45" fill="#fff" stroke="#000" stroke-width="1.5"/>
<circle cx="430.0" cy="285.6" r="2.45" fill="#fff" stroke="#000" stroke-width="1.5"/>
<circle cx="439.6" cy="264.4" r="2.45" fill="#fff" stroke="#000" stroke-width="1.5"/>
<circle cx="449.1" cy="243.4" r="2.45" fill="#fff" stroke="#000" stroke-width="1.5"/>
<circle cx="458.7" cy="259.6" r="2.45" fill="#fff" stroke="#000" stroke-width="1.5"/>
<circle cx="468.2" cy="269.4" r="2.45" fill="#fff" stroke="#000" stroke-width="1.5"/>
<circle cx="477.8" cy="274.4" r="2.45" fill="#fff" stroke="#000" stroke-width="1.5"/>
<circle cx="487.3" cy="279.0" r="2.45" fill="#fff" stroke="#000" stroke-width="1.5"/>
<circle cx="496.9" cy="283.0" r="2.45" fill="#fff" stroke="#000" stroke-width="1.5"/>
<circle cx="506.4" cy="284.0" r="2.45" fill="#fff" stroke="#000" stroke-width="1.5"/>
<circle cx="515.9" cy="270.4" r="2.45" fill="#fff" stroke="#000" stroke-width="1.5"/>
<circle cx="525.5" cy="258.4" r="2.45" fill="#fff" stroke="#000" stroke-width="1.5"/>
<circle cx="535.0" cy="267.0" r="2.45" fill="#fff" stroke="#000" stroke-width="1.5"/>
<circle cx="544.6" cy="269.4" r="2.45" fill="#fff" stroke="#000" stroke-width="1.5"/>
<circle cx="554.1" cy="271.4" r="2.45" fill="#fff" stroke="#000" stroke-width="1.5"/>
<circle cx="563.7" cy="273.0" r="2.45" fill="#fff" stroke="#000" stroke-width="1.5"/>
<circle cx="573.2" cy="274.4" r="2.45" fill="#fff" stroke="#000" stroke-width="1.5"/>
<circle cx="582.8" cy="278.6" r="2.45" fill="#fff" stroke="#000" stroke-width="1.5"/>
<circle cx="592.3" cy="264.4" r="2.45" fill="#fff" stroke="#000" stroke-width="1.5"/>
<circle cx="601.8" cy="249.3" r="2.45" fill="#fff" stroke="#000" stroke-width="1.5"/>
<circle cx="611.4" cy="259.3" r="2.45" fill="#fff" stroke="#000" stroke-width="1.5"/>
<circle cx="620.9" cy="269.3" r="2.45" fill="#fff" stroke="#000" stroke-width="1.5"/>
<circle cx="630.5" cy="274.5" r="2.45" fill="#fff" stroke="#000" stroke-width="1.5"/>
<circle cx="640.0" cy="280.0" r="2.45" fill="#fff" stroke="#000" stroke-width="1.5"/>
<circle cx="649.6" cy="284.5" r="2.45" fill="#fff" stroke="#000" stroke-width="1.5"/>
<circle cx="659.1" cy="288.0" r="2.45" fill="#fff" stroke="#000" stroke-width="1.5"/>
<circle cx="668.6" cy="269.5" r="2.45" fill="#fff" stroke="#000" stroke-width="1.5"/>
<circle cx="678.2" cy="244.5" r="2.45" fill="#fff" stroke="#000" stroke-width="1.5"/>
<circle cx="687.7" cy="260.0" r="2.45" fill="#fff" stroke="#000" stroke-width="1.5"/>
<circle cx="697.3" cy="271.3" r="2.45" fill="#fff" stroke="#000" stroke-width="1.5"/>
<circle cx="706.8" cy="274.5" r="2.45" fill="#fff" stroke="#000" stroke-width="1.5"/>
<circle cx="716.4" cy="268.0" r="2.45" fill="#fff" stroke="#000" stroke-width="1.5"/>
<circle cx="725.9" cy="268.0" r="2.45" fill="#fff" stroke="#000" stroke-width="1.5"/>
<circle cx="735.5" cy="267.5" r="2.45" fill="#fff" stroke="#000" stroke-width="1.5"/>
<circle cx="745.0" cy="263.0" r="2.45" fill="#fff" stroke="#000" stroke-width="1.5"/>
<circle cx="754.5" cy="257.5" r="2.45" fill="#fff" stroke="#000" stroke-width="1.5"/>
<circle cx="764.1" cy="263.8" r="2.45" fill="#fff" stroke="#000" stroke-width="1.5"/>
<circle cx="773.6" cy="269.5" r="2.45" fill="#fff" stroke="#000" stroke-width="1.5"/>
<circle cx="783.2" cy="270.5" r="2.45" fill="#fff" stroke="#000" stroke-width="1.5"/>
<circle cx="792.7" cy="267.0" r="2.45" fill="#fff" stroke="#000" stroke-width="1.5"/>
</g>
<text x="56.0" y="338.2" font-size="12" fill="#0f2248" text-anchor="middle">0</text>
<text x="131.5" y="338.2" font-size="12" fill="#0f2248" text-anchor="middle">0</text>
<text x="209.0" y="338.2" font-size="12" fill="#0f2248" text-anchor="middle">0</text>
<text x="284.0" y="338.2" font-size="12" fill="#0f2248" text-anchor="middle">0</text>
<text x="360.5" y="338.2" font-size="12" fill="#0f2248" text-anchor="middle">0</text>
<text x="436.5" y="338.2" font-size="12" fill="#0f2248" text-anchor="middle">0</text>
<text x="513.5" y="338.2" font-size="12" fill="#0f2248" text-anchor="middle">0</text>
<text x="589.5" y="338.2" font-size="12" fill="#0f2248" text-anchor="middle">0</text>
<text x="669.5" y="338.2" font-size="12" fill="#0f2248" text-anchor="middle">0</text>
<text x="746.0" y="338.2" font-size="12" fill="#0f2248" text-anchor="middle">0</text>
<defs><linearGradient id="ggust" gradientUnits="userSpaceOnUse" x1="0" y1="520.4" x2="0" y2="572.3">
<stop offset="0.000" stop-color="#d27800"/>
<stop offset="0.095" stop-color="#c88c00"/>
<stop offset="0.190" stop-color="#aaa000"/>
<stop offset="0.286" stop-color="#82aa0a"/>
<stop offset="0.405" stop-color="#64b40a"/>
<stop offset="0.524" stop-color="#46be00"/>
<stop offset="0.643" stop-color="#28c800"/>
<stop offset="0.762" stop-color="#00d700"/>
<stop offset="1.000" stop-color="#00e100"/>
</linearGradient></defs>
<g clip-path="url(#cp6)">
<polygon points="30.0,573.0 30.0,553.8 39.5,552.0 49.3,537.5 58.8,539.5 68.3,535.8 77.8,539.5 87.3,540.0 97.0,547.5 105.0,552.0 106.5,553.0 116.0,553.8 125.8,557.0 135.3,557.5 144.8,557.5 154.3,562.5 163.8,565.0 173.3,570.0 182.8,570.5 190.0,565.0 200.0,561.3 211.0,558.8 220.8,558.0 230.3,559.5 239.8,548.8 249.3,540.0 258.8,535.8 268.3,539.3 277.8,538.0 287.5,545.0 297.0,549.5 306.5,552.0 316.0,554.5 325.5,557.0 333.8,563.8 335.0,565.0 344.5,566.8 354.0,565.5 363.5,563.8 373.0,559.5 382.5,555.5 391.5,550.0 401.0,546.3 410.5,542.5 420.0,536.3 429.5,531.3 439.0,526.3 448.5,523.0 455.0,522.0 462.5,525.0 470.0,528.8 477.5,530.5 487.0,541.3 496.5,547.5 506.0,551.3 515.5,555.5 525.0,560.0 534.5,561.3 544.0,562.5 553.5,563.0 563.0,562.5 572.5,562.5 581.5,562.8 590.0,565.0 601.6,567.0 611.7,568.0 621.7,568.5 631.8,567.0 640.4,564.2 650.5,562.8 660.6,558.4 670.6,551.3 680.7,545.0 689.3,539.2 699.4,539.8 708.0,540.3 716.6,545.0 726.7,554.1 736.8,560.5 746.0,565.0 755.5,567.0 765.5,566.2 774.7,564.2 784.2,564.2 792.0,564.2 792.0,573.0" fill="url(#ggust)" />
<polygon points="30.0,573.0 30.0,563.0 39.5,563.0 49.3,560.0 58.8,560.5 68.3,558.0 77.8,558.0 87.3,558.0 97.0,560.5 106.5,563.8 116.0,563.8 125.8,562.0 135.3,562.5 144.8,565.5 154.3,567.5 163.8,568.8 173.3,570.5 182.8,570.8 190.0,567.0 200.0,565.5 211.0,565.5 220.8,566.3 230.3,567.0 239.8,563.0 249.3,560.5 258.8,558.8 268.3,558.8 277.8,558.0 287.5,562.0 297.0,562.5 306.5,563.0 316.0,562.5 325.5,563.3 335.0,568.8 344.5,568.8 354.0,568.8 363.5,567.5 373.0,565.0 382.5,563.0 391.5,561.3 401.0,559.5 410.5,558.0 420.0,556.3 429.5,554.5 439.0,548.8 448.5,546.3 455.0,546.3 462.5,550.0 470.0,553.0 477.5,553.8 487.0,556.3 496.5,558.0 506.0,560.0 515.5,562.0 525.0,564.5 534.5,564.5 544.0,565.0 553.5,565.0 563.0,564.5 572.5,564.2 581.5,563.8 590.0,565.6 601.6,568.6 611.7,569.8 621.7,570.0 631.8,568.8 640.4,565.0 650.5,563.6 660.6,562.2 670.6,559.9 680.7,556.4 689.3,555.6 699.4,556.4 708.0,557.0 716.6,559.3 726.7,562.2 736.8,563.6 746.0,566.2 755.5,568.0 765.5,567.4 774.7,565.6 784.2,565.0 792.0,565.0 792.0,573.0" fill="#b8b000" />
<polygon points="30.0,576.1 30.0,566.1 39.5,566.1 49.3,563.1 58.8,563.6 68.3,561.1 77.8,561.1 87.3,561.1 97.0,563.6 106.5,566.9 116.0,566.9 125.8,565.1 135.3,565.6 144.8,568.6 154.3,570.6 163.8,571.9 173.3,573.6 182.8,573.9 190.0,570.1 200.0,568.6 211.0,568.6 220.8,569.4 230.3,570.1 239.8,566.1 249.3,563.6 258.8,561.9 268.3,561.9 277.8,561.1 287.5,565.1 297.0,565.6 306.5,566.1 316.0,565.6 325.5,566.4 335.0,571.9 344.5,571.9 354.0,571.9 363.5,570.6 373.0,568.1 382.5,566.1 391.5,564.4 401.0,562.6 410.5,561.1 420.0,559.4 429.5,557.6 439.0,551.9 448.5,549.4 455.0,549.4 462.5,553.1 470.0,556.1 477.5,556.9 487.0,559.4 496.5,561.1 506.0,563.1 515.5,565.1 525.0,567.6 534.5,567.6 544.0,568.1 553.5,568.1 563.0,567.6 572.5,567.3 581.5,566.9 590.0,568.7 601.6,571.7 611.7,572.9 621.7,573.1 631.8,571.9 640.4,568.1 650.5,566.7 660.6,565.3 670.6,563.0 680.7,559.5 689.3,558.7 699.4,559.5 708.0,560.1 716.6,562.4 726.7,565.3 736.8,566.7 746.0,569.3 755.5,571.1 765.5,570.5 774.7,568.7 784.2,568.1 792.0,568.1 792.0,576.1" fill="#c0b800" />
<polygon points="30.0,579.2 30.0,569.2 39.5,569.2 49.3,566.2 58.8,566.7 68.3,564.2 77.8,564.2 87.3,564.2 97.0,566.7 106.5,570.0 116.0,570.0 125.8,568.2 135.3,568.7 144.8,571.7 154.3,573.7 163.8,575.0 173.3,576.7 182.8,577.0 190.0,573.2 200.0,571.7 211.0,571.7 220.8,572.5 230.3,573.2 239.8,569.2 249.3,566.7 258.8,565.0 268.3,565.0 277.8,564.2 287.5,568.2 297.0,568.7 306.5,569.2 316.0,568.7 325.5,569.5 335.0,575.0 344.5,575.0 354.0,575.0 363.5,573.7 373.0,571.2 382.5,569.2 391.5,567.5 401.0,565.7 410.5,564.2 420.0,562.5 429.5,560.7 439.0,555.0 448.5,552.5 455.0,552.5 462.5,556.2 470.0,559.2 477.5,560.0 487.0,562.5 496.5,564.2 506.0,566.2 515.5,568.2 525.0,570.7 534.5,570.7 544.0,571.2 553.5,571.2 563.0,570.7 572.5,570.4 581.5,570.0 590.0,571.8 601.6,574.8 611.7,576.0 621.7,576.2 631.8,575.0 640.4,571.2 650.5,569.8 660.6,568.4 670.6,566.1 680.7,562.6 689.3,561.8 699.4,562.6 708.0,563.2 716.6,565.5 726.7,568.4 736.8,569.8 746.0,572.4 755.5,574.2 765.5,573.6 774.7,571.8 784.2,571.2 792.0,571.2 792.0,579.2" fill="#c8c200" />
<polygon points="30.0,582.3 30.0,572.3 39.5,572.3 49.3,569.3 58.8,569.8 68.3,567.3 77.8,567.3 87.3,567.3 97.0,569.8 106.5,573.1 116.0,573.1 125.8,571.3 135.3,571.8 144.8,574.8 154.3,576.8 163.8,578.1 173.3,579.8 182.8,580.1 190.0,576.3 200.0,574.8 211.0,574.8 220.8,575.6 230.3,576.3 239.8,572.3 249.3,569.8 258.8,568.1 268.3,568.1 277.8,567.3 287.5,571.3 297.0,571.8 306.5,572.3 316.0,571.8 325.5,572.6 335.0,578.1 344.5,578.1 354.0,578.1 363.5,576.8 373.0,574.3 382.5,572.3 391.5,570.6 401.0,568.8 410.5,567.3 420.0,565.6 429.5,563.8 439.0,558.1 448.5,555.6 455.0,555.6 462.5,559.3 470.0,562.3 477.5,563.1 487.0,565.6 496.5,567.3 506.0,569.3 515.5,571.3 525.0,573.8 534.5,573.8 544.0,574.3 553.5,574.3 563.0,573.8 572.5,573.5 581.5,573.1 590.0,574.9 601.6,577.9 611.7,579.1 621.7,579.3 631.8,578.1 640.4,574.3 650.5,572.9 660.6,571.5 670.6,569.2 680.7,565.7 689.3,564.9 699.4,565.7 708.0,566.3 716.6,568.6 726.7,571.5 736.8,572.9 746.0,575.5 755.5,577.3 765.5,576.7 774.7,574.9 784.2,574.3 792.0,574.3 792.0,582.3" fill="#d2cc00" />
<polygon points="30.0,585.4 30.0,575.4 39.5,575.4 49.3,572.4 58.8,572.9 68.3,570.4 77.8,570.4 87.3,570.4 97.0,572.9 106.5,576.2 116.0,576.2 125.8,574.4 135.3,574.9 144.8,577.9 154.3,579.9 163.8,581.2 173.3,582.9 182.8,583.2 190.0,579.4 200.0,577.9 211.0,577.9 220.8,578.7 230.3,579.4 239.8,575.4 249.3,572.9 258.8,571.2 268.3,571.2 277.8,570.4 287.5,574.4 297.0,574.9 306.5,575.4 316.0,574.9 325.5,575.7 335.0,581.2 344.5,581.2 354.0,581.2 363.5,579.9 373.0,577.4 382.5,575.4 391.5,573.7 401.0,571.9 410.5,570.4 420.0,568.7 429.5,566.9 439.0,561.2 448.5,558.7 455.0,558.7 462.5,562.4 470.0,565.4 477.5,566.2 487.0,568.7 496.5,570.4 506.0,572.4 515.5,574.4 525.0,576.9 534.5,576.9 544.0,577.4 553.5,577.4 563.0,576.9 572.5,576.6 581.5,576.2 590.0,578.0 601.6,581.0 611.7,582.2 621.7,582.4 631.8,581.2 640.4,577.4 650.5,576.0 660.6,574.6 670.6,572.3 680.7,568.8 689.3,568.0 699.4,568.8 708.0,569.4 716.6,571.7 726.7,574.6 736.8,576.0 746.0,578.6 755.5,580.4 765.5,579.8 774.7,578.0 784.2,577.4 792.0,577.4 792.0,585.4" fill="#dcd800" />
<polygon points="30.0,588.5 30.0,578.5 39.5,578.5 49.3,575.5 58.8,576.0 68.3,573.5 77.8,573.5 87.3,573.5 97.0,576.0 106.5,579.3 116.0,579.3 125.8,577.5 135.3,578.0 144.8,581.0 154.3,583.0 163.8,584.3 173.3,586.0 182.8,586.3 190.0,582.5 200.0,581.0 211.0,581.0 220.8,581.8 230.3,582.5 239.8,578.5 249.3,576.0 258.8,574.3 268.3,574.3 277.8,573.5 287.5,577.5 297.0,578.0 306.5,578.5 316.0,578.0 325.5,578.8 335.0,584.3 344.5,584.3 354.0,584.3 363.5,583.0 373.0,580.5 382.5,578.5 391.5,576.8 401.0,575.0 410.5,573.5 420.0,571.8 429.5,570.0 439.0,564.3 448.5,561.8 455.0,561.8 462.5,565.5 470.0,568.5 477.5,569.3 487.0,571.8 496.5,573.5 506.0,575.5 515.5,577.5 525.0,580.0 534.5,580.0 544.0,580.5 553.5,580.5 563.0,580.0 572.5,579.7 581.5,579.3 590.0,581.1 601.6,584.1 611.7,585.3 621.7,585.5 631.8,584.3 640.4,580.5 650.5,579.1 660.6,577.7 670.6,575.4 680.7,571.9 689.3,571.1 699.4,571.9 708.0,572.5 716.6,574.8 726.7,577.7 736.8,579.1 746.0,581.7 755.5,583.5 765.5,582.9 774.7,581.1 784.2,580.5 792.0,580.5 792.0,588.5" fill="#e6e400" />
<polygon points="30.0,591.6 30.0,581.6 39.5,581.6 49.3,578.6 58.8,579.1 68.3,576.6 77.8,576.6 87.3,576.6 97.0,579.1 106.5,582.4 116.0,582.4 125.8,580.6 135.3,581.1 144.8,584.1 154.3,586.1 163.8,587.4 173.3,589.1 182.8,589.4 190.0,585.6 200.0,584.1 211.0,584.1 220.8,584.9 230.3,585.6 239.8,581.6 249.3,579.1 258.8,577.4 268.3,577.4 277.8,576.6 287.5,580.6 297.0,581.1 306.5,581.6 316.0,581.1 325.5,581.9 335.0,587.4 344.5,587.4 354.0,587.4 363.5,586.1 373.0,583.6 382.5,581.6 391.5,579.9 401.0,578.1 410.5,576.6 420.0,574.9 429.5,573.1 439.0,567.4 448.5,564.9 455.0,564.9 462.5,568.6 470.0,571.6 477.5,572.4 487.0,574.9 496.5,576.6 506.0,578.6 515.5,580.6 525.0,583.1 534.5,583.1 544.0,583.6 553.5,583.6 563.0,583.1 572.5,582.8 581.5,582.4 590.0,584.2 601.6,587.2 611.7,588.4 621.7,588.6 631.8,587.4 640.4,583.6 650.5,582.2 660.6,580.8 670.6,578.5 680.7,575.0 689.3,574.2 699.4,575.0 708.0,575.6 716.6,577.9 726.7,580.8 736.8,582.2 746.0,584.8 755.5,586.6 765.5,586.0 774.7,584.2 784.2,583.6 792.0,583.6 792.0,591.6" fill="#f0ee00" />
<polygon points="30.0,594.7 30.0,584.7 39.5,584.7 49.3,581.7 58.8,582.2 68.3,579.7 77.8,579.7 87.3,579.7 97.0,582.2 106.5,585.5 116.0,585.5 125.8,583.7 135.3,584.2 144.8,587.2 154.3,589.2 163.8,590.5 173.3,592.2 182.8,592.5 190.0,588.7 200.0,587.2 211.0,587.2 220.8,588.0 230.3,588.7 239.8,584.7 249.3,582.2 258.8,580.5 268.3,580.5 277.8,579.7 287.5,583.7 297.0,584.2 306.5,584.7 316.0,584.2 325.5,585.0 335.0,590.5 344.5,590.5 354.0,590.5 363.5,589.2 373.0,586.7 382.5,584.7 391.5,583.0 401.0,581.2 410.5,579.7 420.0,578.0 429.5,576.2 439.0,570.5 448.5,568.0 455.0,568.0 462.5,571.7 470.0,574.7 477.5,575.5 487.0,578.0 496.5,579.7 506.0,581.7 515.5,583.7 525.0,586.2 534.5,586.2 544.0,586.7 553.5,586.7 563.0,586.2 572.5,585.9 581.5,585.5 590.0,587.3 601.6,590.3 611.7,591.5 621.7,591.7 631.8,590.5 640.4,586.7 650.5,585.3 660.6,583.9 670.6,581.6 680.7,578.1 689.3,577.3 699.4,578.1 708.0,578.7 716.6,581.0 726.7,583.9 736.8,585.3 746.0,587.9 755.5,589.7 765.5,589.1 774.7,587.3 784.2,586.7 792.0,586.7 792.0,594.7" fill="#f8f600" />
</g>
<line x1="31" y1="50.5" x2="790" y2="50.5" stroke="#c8c0b2" stroke-width="1" stroke-dasharray="2 4.5"/>
<line x1="26" y1="50.5" x2="29" y2="50.5" stroke="#fff" stroke-width="1"/>
<text x="24" y="54.1" font-size="11.5" fill="#fff" text-anchor="end">100</text>
<line x1="31" y1="65.5" x2="790" y2="65.5" stroke="#c8c0b2" stroke-width="1" stroke-dasharray="2 4.5"/>
<line x1="26" y1="65.5" x2="29" y2="65.5" stroke="#fff" stroke-width="1"/>
<text x="24" y="69.2" font-size="11.5" fill="#fff" text-anchor="end">80</text>
<line x1="31" y1="81.5" x2="790" y2="81.5" stroke="#c8c0b2" stroke-width="1" stroke-dasharray="2 4.5"/>
<line x1="26" y1="81.5" x2="29" y2="81.5" stroke="#fff" stroke-width="1"/>
<text x="24" y="85.2" font-size="11.5" fill="#fff" text-anchor="end">60</text>
<line x1="31" y1="96.5" x2="790" y2="96.5" stroke="#c8c0b2" stroke-width="1" stroke-dasharray="2 4.5"/>
<line x1="26" y1="96.5" x2="29" y2="96.5" stroke="#fff" stroke-width="1"/>
<text x="24" y="100.4" font-size="11.5" fill="#fff" text-anchor="end">40</text>
<line x1="31" y1="112.5" x2="790" y2="112.5" stroke="#c8c0b2" stroke-width="1" stroke-dasharray="2 4.5"/>
<line x1="26" y1="112.5" x2="29" y2="112.5" stroke="#fff" stroke-width="1"/>
<text x="24" y="116.3" font-size="11.5" fill="#fff" text-anchor="end">20</text>
<line x1="31" y1="181.5" x2="790" y2="181.5" stroke="#c8c0b2" stroke-width="1" stroke-dasharray="2 4.5"/>
<line x1="26" y1="181.5" x2="29" y2="181.5" stroke="#fff" stroke-width="1"/>
<text x="24" y="186.1" font-size="11.5" fill="#fff" text-anchor="end">1025</text>
<line x1="31" y1="326.5" x2="790" y2="326.5" stroke="#c8c0b2" stroke-width="1" stroke-dasharray="2 4.5"/>
<line x1="26" y1="326.5" x2="29" y2="326.5" stroke="#fff" stroke-width="1"/>
<text x="24" y="330.0" font-size="11.5" fill="#fff" text-anchor="end">10</text>
<line x1="31" y1="368.5" x2="790" y2="368.5" stroke="#c8c0b2" stroke-width="1" stroke-dasharray="2 4.5"/>
<line x1="26" y1="368.5" x2="29" y2="368.5" stroke="#fff" stroke-width="1"/>
<text x="24" y="372.3" font-size="11.5" fill="#fff" text-anchor="end">5</text>
<line x1="31" y1="402.5" x2="790" y2="402.5" stroke="#c8c0b2" stroke-width="1" stroke-dasharray="2 4.5"/>
<line x1="26" y1="402.5" x2="29" y2="402.5" stroke="#fff" stroke-width="1"/>
<text x="24" y="406.3" font-size="11.5" fill="#fff" text-anchor="end">1</text>
<line x1="31" y1="416.5" x2="790" y2="416.5" stroke="#c8c0b2" stroke-width="1" stroke-dasharray="2 4.5"/>
<line x1="26" y1="416.5" x2="29" y2="416.5" stroke="#fff" stroke-width="1"/>
<text x="24" y="420.1" font-size="11.5" fill="#fff" text-anchor="end">2</text>
<line x1="31" y1="427.5" x2="790" y2="427.5" stroke="#c8c0b2" stroke-width="1" stroke-dasharray="2 4.5"/>
<line x1="26" y1="427.5" x2="29" y2="427.5" stroke="#fff" stroke-width="1"/>
<text x="24" y="431.3" font-size="11.5" fill="#fff" text-anchor="end">0</text>
<line x1="31" y1="439.5" x2="790" y2="439.5" stroke="#c8c0b2" stroke-width="1" stroke-dasharray="2 4.5"/>
<line x1="26" y1="439.5" x2="29" y2="439.5" stroke="#fff" stroke-width="1"/>
<text x="24" y="443.0" font-size="11.5" fill="#fff" text-anchor="end">−2</text>
<line x1="31" y1="450.5" x2="790" y2="450.5" stroke="#c8c0b2" stroke-width="1" stroke-dasharray="2 4.5"/>
<line x1="26" y1="450.5" x2="29" y2="450.5" stroke="#fff" stroke-width="1"/>
<text x="24" y="454.0" font-size="11.5" fill="#fff" text-anchor="end">−4</text>
<line x1="31" y1="462.5" x2="790" y2="462.5" stroke="#c8c0b2" stroke-width="1" stroke-dasharray="2 4.5"/>
<line x1="26" y1="462.5" x2="29" y2="462.5" stroke="#fff" stroke-width="1"/>
<text x="24" y="466.3" font-size="11.5" fill="#fff" text-anchor="end">−6</text>
<line x1="31" y1="486.5" x2="790" y2="486.5" stroke="#c8c0b2" stroke-width="1" stroke-dasharray="2 4.5"/>
<line x1="26" y1="486.5" x2="29" y2="486.5" stroke="#fff" stroke-width="1"/>
<text x="24" y="490.1" font-size="11.5" fill="#fff" text-anchor="end">70</text>
<line x1="31" y1="498.5" x2="790" y2="498.5" stroke="#c8c0b2" stroke-width="1" stroke-dasharray="2 4.5"/>
<line x1="26" y1="498.5" x2="29" y2="498.5" stroke="#fff" stroke-width="1"/>
<text x="24" y="502.2" font-size="11.5" fill="#fff" text-anchor="end">60</text>
<line x1="31" y1="510.5" x2="790" y2="510.5" stroke="#c8c0b2" stroke-width="1" stroke-dasharray="2 4.5"/>
<line x1="26" y1="510.5" x2="29" y2="510.5" stroke="#fff" stroke-width="1"/>
<text x="24" y="514.4" font-size="11.5" fill="#fff" text-anchor="end">50</text>
<line x1="31" y1="523.5" x2="790" y2="523.5" stroke="#c8c0b2" stroke-width="1" stroke-dasharray="2 4.5"/>
<line x1="26" y1="523.5" x2="29" y2="523.5" stroke="#fff" stroke-width="1"/>
<text x="24" y="526.8" font-size="11.5" fill="#fff" text-anchor="end">40</text>
<line x1="31" y1="535.5" x2="790" y2="535.5" stroke="#c8c0b2" stroke-width="1" stroke-dasharray="2 4.5"/>
<line x1="26" y1="535.5" x2="29" y2="535.5" stroke="#fff" stroke-width="1"/>
<text x="24" y="539.2" font-size="11.5" fill="#fff" text-anchor="end">30</text>
<line x1="31" y1="548.5" x2="790" y2="548.5" stroke="#c8c0b2" stroke-width="1" stroke-dasharray="2 4.5"/>
<line x1="26" y1="548.5" x2="29" y2="548.5" stroke="#fff" stroke-width="1"/>
<text x="24" y="552.0" font-size="11.5" fill="#fff" text-anchor="end">20</text>
<line x1="31" y1="560.5" x2="790" y2="560.5" stroke="#c8c0b2" stroke-width="1" stroke-dasharray="2 4.5"/>
<line x1="26" y1="560.5" x2="29" y2="560.5" stroke="#fff" stroke-width="1"/>
<text x="24" y="563.9" font-size="11.5" fill="#fff" text-anchor="end">10</text>
<line x1="105.5" y1="51" x2="105.5" y2="572" stroke="#4173af" stroke-width="1"/>
<line x1="182.5" y1="51" x2="182.5" y2="572" stroke="#4173af" stroke-width="1"/>
<line x1="258.5" y1="51" x2="258.5" y2="572" stroke="#4173af" stroke-width="1"/>
<line x1="334.5" y1="51" x2="334.5" y2="572" stroke="#4173af" stroke-width="1"/>
<line x1="411.5" y1="51" x2="411.5" y2="572" stroke="#4173af" stroke-width="1"/>
<line x1="487.5" y1="51" x2="487.5" y2="572" stroke="#4173af" stroke-width="1"/>
<line x1="563.5" y1="51" x2="563.5" y2="572" stroke="#4173af" stroke-width="1"/>
<line x1="640.5" y1="51" x2="640.5" y2="572" stroke="#4173af" stroke-width="1"/>
<line x1="716.5" y1="51" x2="716.5" y2="572" stroke="#4173af" stroke-width="1"/>
<text x="24" y="576.5" font-size="11.5" fill="#fff" text-anchor="end">0</text>
<line x1="26" y1="572" x2="29" y2="572" stroke="#fff" stroke-width="1"/>
<rect x="29" y="50" width="763" height="522" fill="none" stroke="#fff" stroke-width="2"/>
<line x1="28" y1="128.0" x2="793" y2="128.0" stroke="#fff" stroke-width="2"/>
<line x1="28" y1="205.0" x2="793" y2="205.0" stroke="#fff" stroke-width="2"/>
<line x1="28" y1="318.0" x2="793" y2="318.0" stroke="#fff" stroke-width="2"/>
<line x1="28" y1="410.0" x2="793" y2="410.0" stroke="#fff" stroke-width="2"/>
<line x1="28" y1="473.0" x2="793" y2="473.0" stroke="#fff" stroke-width="2"/>
<line x1="31" y1="50.5" x2="790" y2="50.5" stroke="#b4b0a8" stroke-width="1" stroke-dasharray="2 4.5"/>
<text class="ser" x="45" y="23" font-size="22" fill="#fff" textLength="200" lengthAdjust="spacingAndGlyphs">2025.12.11. 1:00</text>
<text class="ser" x="438" y="23" font-size="22" fill="#fff" textLength="54" lengthAdjust="spacingAndGlyphs">Győr</text>
<text x="64.0" y="45.6" font-size="12.5" fill="#fff" textLength="20" lengthAdjust="spacing">11.</text>
<text x="141.0" y="45.6" font-size="12.5" fill="#fff" textLength="20" lengthAdjust="spacing">12.</text>
<text x="217.5" y="45.6" font-size="12.5" fill="#fff" textLength="20" lengthAdjust="spacing">13.</text>
<text x="286.0" y="45.6" font-size="12.5" fill="#fff" textLength="20" lengthAdjust="spacing">14.</text>
<text x="362.5" y="45.6" font-size="12.5" fill="#fff" textLength="20" lengthAdjust="spacing">15.</text>
<text x="448.5" y="45.6" font-size="12.5" fill="#fff" textLength="20" lengthAdjust="spacing">16.</text>
<text x="517.0" y="45.6" font-size="12.5" fill="#fff" textLength="20" lengthAdjust="spacing">17.</text>
<text x="594.0" y="45.6" font-size="12.5" fill="#fff" textLength="20" lengthAdjust="spacing">18.</text>
<text x="670.0" y="45.6" font-size="12.5" fill="#fff" textLength="20" lengthAdjust="spacing">19.</text>
<text x="740.0" y="45.6" font-size="12.5" fill="#fff" textLength="20" lengthAdjust="spacing">20.</text>
<text x="3" y="598.2" font-size="11.8" fill="#fff" textLength="84" lengthAdjust="spacingAndGlyphs">GrADS: COLA/IGES</text>
<text x="292" y="598.2" font-size="11.8" fill="#08183a" textLength="45" lengthAdjust="spacingAndGlyphs">GFS (C)</text>
<text x="400" y="598.2" font-size="11.8" fill="#08183a" textLength="105" lengthAdjust="spacingAndGlyphs">Opre Gábor (EWS)</text>
<text x="683.5" y="598.2" font-size="11.8" fill="#fff" textLength="95" lengthAdjust="spacingAndGlyphs">2025-12-11-06:06</text>
<rect x="765.0" y="134.0" width="35.0" height="10.5" fill="#000"/>
<text class="ser" x="768.0" y="143.5" font-size="13" font-weight="bold" fill="#ff1493" textLength="34" lengthAdjust="spacingAndGlyphs">1029</text>
<rect x="765.0" y="187.0" width="35.0" height="10.5" fill="#000"/>
<text class="ser" x="768.0" y="196.5" font-size="13" font-weight="bold" fill="#ff1493" textLength="34" lengthAdjust="spacingAndGlyphs">1024</text>
<rect x="772.5" y="211.0" width="27.5" height="11.5" fill="#f53c3c"/>
<text class="ser" x="775.5" y="221.5" font-size="13" font-weight="bold" fill="#000" textLength="16.5" lengthAdjust="spacingAndGlyphs">12</text>
<rect x="773.0" y="300.5" width="27.0" height="11.5" fill="#fff"/>
<text class="ser" x="775.0" y="311.0" font-size="13" font-weight="bold" fill="#000" textLength="8" lengthAdjust="spacingAndGlyphs">0</text>
<rect x="773.0" y="324.0" width="27.0" height="12.0" fill="#97a7c8"/>
<text class="ser" x="775.0" y="335.0" font-size="13" font-weight="bold" fill="#000" textLength="8" lengthAdjust="spacingAndGlyphs">0</text>
<rect x="773.0" y="338.0" width="27.0" height="11.6" fill="#fff"/>
<text class="ser" x="775.0" y="348.6" font-size="13" font-weight="bold" fill="#000" textLength="8" lengthAdjust="spacingAndGlyphs">0</text>
<rect x="773.0" y="352.4" width="27.0" height="11.2" fill="#000"/>
<text class="ser" x="775.0" y="362.6" font-size="13" font-weight="bold" fill="#ff3c3c" textLength="8" lengthAdjust="spacingAndGlyphs">0</text>
<rect x="773.0" y="367.0" width="27.0" height="11.0" fill="#97a7c8"/>
<text class="ser" x="775.0" y="377.0" font-size="13" font-weight="bold" fill="#f0148c" textLength="8" lengthAdjust="spacingAndGlyphs">0</text>
<rect x="767.0" y="441.4" width="33.0" height="10.6" fill="#20bcc8"/>
<text class="ser" x="769.0" y="451.0" font-size="13" font-weight="bold" fill="#fff" textLength="38" lengthAdjust="spacingAndGlyphs">10.33</text>
<rect x="767.0" y="455.0" width="33.0" height="11.0" fill="#e0a028"/>
<text class="ser" x="769.0" y="465.0" font-size="13" font-weight="bold" fill="#000" textLength="38" lengthAdjust="spacingAndGlyphs">5.574</text>
<rect x="773.0" y="480.0" width="27.0" height="10.6" fill="#f53c3c"/>
<text class="ser" x="775.0" y="489.6" font-size="13" font-weight="bold" fill="#000" textLength="16.5" lengthAdjust="spacingAndGlyphs">41</text>
<rect x="773.0" y="494.0" width="27.0" height="11.0" fill="#e6d832"/>
<text class="ser" x="775.0" y="504.0" font-size="13" font-weight="bold" fill="#1428dc" textLength="16.5" lengthAdjust="spacingAndGlyphs">21</text>
<g>
<path d="M29.2 523.0L36.2 528.0M32.8 527.8L36.2 528.0L34.9 524.9" fill="none" stroke="#f5eb46" stroke-width="1.15" stroke-linecap="round" stroke-linejoin="round"/>
<path d="M38.7 523.0L46.1 528.0M42.7 527.9L46.1 528.0L44.7 524.9" fill="none" stroke="#f5eb46" stroke-width="1.15" stroke-linecap="round" stroke-linejoin="round"/>
<path d="M48.3 523.0L54.9 529.4M51.6 528.7L54.9 529.4L54.1 526.1" fill="none" stroke="#f5eb46" stroke-width="1.15" stroke-linecap="round" stroke-linejoin="round"/>
<path d="M57.8 523.0L64.8 528.0M61.4 527.8L64.8 528.0L63.5 524.9" fill="none" stroke="#f5eb46" stroke-width="1.15" stroke-linecap="round" stroke-linejoin="round"/>
<path d="M67.4 523.0L73.6 529.4M70.3 528.6L73.6 529.4L72.8 526.1" fill="none" stroke="#f5eb46" stroke-width="1.15" stroke-linecap="round" stroke-linejoin="round"/>
<path d="M76.9 523.0L83.9 529.0M80.5 528.5L83.9 529.0L82.9 525.7" fill="none" stroke="#f5eb46" stroke-width="1.15" stroke-linecap="round" stroke-linejoin="round"/>
<path d="M86.5 523.0L92.5 529.4M89.2 528.5L92.5 529.4L91.8 526.1" fill="none" stroke="#f5eb46" stroke-width="1.15" stroke-linecap="round" stroke-linejoin="round"/>
<path d="M96.0 523.0L102.0 530.0M98.8 529.0L102.0 530.0L101.5 526.6" fill="none" stroke="#f5eb46" stroke-width="1.15" stroke-linecap="round" stroke-linejoin="round"/>
<path d="M105.6 523.0L111.0 529.6M107.7 528.5L111.0 529.6L110.5 526.2" fill="none" stroke="#f5eb46" stroke-width="1.15" stroke-linecap="round" stroke-linejoin="round"/>
<path d="M115.1 523.0L119.5 530.4M116.5 528.8L119.5 530.4L119.6 527.0" fill="none" stroke="#f5eb46" stroke-width="1.15" stroke-linecap="round" stroke-linejoin="round"/>
<path d="M124.6 523.0L132.6 527.0M129.2 527.3L132.6 527.0L130.9 524.1" fill="none" stroke="#f5eb46" stroke-width="1.15" stroke-linecap="round" stroke-linejoin="round"/>
<path d="M134.2 523.0L142.2 527.4M138.8 527.6L142.2 527.4L140.5 524.4" fill="none" stroke="#f5eb46" stroke-width="1.15" stroke-linecap="round" stroke-linejoin="round"/>
<path d="M143.7 523.0L150.3 529.0M147.0 528.4L150.3 529.0L149.4 525.7" fill="none" stroke="#f5eb46" stroke-width="1.15" stroke-linecap="round" stroke-linejoin="round"/>
<path d="M153.3 523.0L156.9 531.0M154.0 529.1L156.9 531.0L157.3 527.6" fill="none" stroke="#f5eb46" stroke-width="1.15" stroke-linecap="round" stroke-linejoin="round"/>
<path d="M162.8 523.0L167.2 530.0M164.2 528.5L167.2 530.0L167.2 526.6" fill="none" stroke="#f5eb46" stroke-width="1.15" stroke-linecap="round" stroke-linejoin="round"/>
<path d="M172.4 523.0L176.8 516.4M176.6 519.8L176.8 516.4L173.7 517.8" fill="none" stroke="#f5eb46" stroke-width="1.15" stroke-linecap="round" stroke-linejoin="round"/>
<path d="M181.9 518.5L181.9 515.0M182.9 516.6L181.9 515.0L180.9 516.6" fill="none" stroke="#f5eb46" stroke-width="1.15" stroke-linecap="round" stroke-linejoin="round"/>
<path d="M191.4 523.0L191.4 513.0M193.2 515.9L191.4 513.0L189.7 515.9" fill="none" stroke="#f5eb46" stroke-width="1.15" stroke-linecap="round" stroke-linejoin="round"/>
<path d="M201.0 523.0L195.0 515.4M198.2 516.6L195.0 515.4L195.4 518.8" fill="none" stroke="#f5eb46" stroke-width="1.15" stroke-linecap="round" stroke-linejoin="round"/>
<path d="M210.5 523.0L206.5 515.0M209.4 516.8L206.5 515.0L206.2 518.4" fill="none" stroke="#f5eb46" stroke-width="1.15" stroke-linecap="round" stroke-linejoin="round"/>
<path d="M220.1 523.0L220.1 513.0M221.9 515.9L220.1 513.0L218.3 515.9" fill="none" stroke="#f5eb46" stroke-width="1.15" stroke-linecap="round" stroke-linejoin="round"/>
<path d="M229.6 523.0L233.6 515.4M233.9 518.8L233.6 515.4L230.7 517.1" fill="none" stroke="#f5eb46" stroke-width="1.15" stroke-linecap="round" stroke-linejoin="round"/>
<path d="M239.2 523.0L248.4 523.6M245.4 525.2L248.4 523.6L245.6 521.6" fill="none" stroke="#f5eb46" stroke-width="1.15" stroke-linecap="round" stroke-linejoin="round"/>
<path d="M248.7 523.0L257.5 526.4M254.2 527.0L257.5 526.4L255.5 523.7" fill="none" stroke="#f5eb46" stroke-width="1.15" stroke-linecap="round" stroke-linejoin="round"/>
<path d="M258.3 523.0L264.3 529.6M261.0 528.7L264.3 529.6L263.6 526.2" fill="none" stroke="#f5eb46" stroke-width="1.15" stroke-linecap="round" stroke-linejoin="round"/>
<path d="M267.8 523.0L274.4 529.6M271.1 528.8L274.4 529.6L273.6 526.3" fill="none" stroke="#f5eb46" stroke-width="1.15" stroke-linecap="round" stroke-linejoin="round"/>
<path d="M277.3 523.0L282.9 530.0M279.7 528.9L282.9 530.0L282.5 526.6" fill="none" stroke="#f5eb46" stroke-width="1.15" stroke-linecap="round" stroke-linejoin="round"/>
<path d="M286.9 523.0L292.5 530.4M289.3 529.2L292.5 530.4L292.2 527.0" fill="none" stroke="#f5eb46" stroke-width="1.15" stroke-linecap="round" stroke-linejoin="round"/>
<path d="M296.4 523.0L305.8 524.4M302.7 525.8L305.8 524.4L303.2 522.2" fill="none" stroke="#f5eb46" stroke-width="1.15" stroke-linecap="round" stroke-linejoin="round"/>
<path d="M306.0 523.0L314.0 522.4M311.2 524.4L314.0 522.4L310.9 520.8" fill="none" stroke="#f5eb46" stroke-width="1.15" stroke-linecap="round" stroke-linejoin="round"/>
<path d="M315.5 523.0L324.5 523.0M321.6 524.8L324.5 523.0L321.6 521.2" fill="none" stroke="#f5eb46" stroke-width="1.15" stroke-linecap="round" stroke-linejoin="round"/>
<path d="M325.1 523.0L333.5 517.8M331.9 520.9L333.5 517.8L330.1 517.8" fill="none" stroke="#f5eb46" stroke-width="1.15" stroke-linecap="round" stroke-linejoin="round"/>
<path d="M334.6 523.0L341.0 518.0M339.8 521.2L341.0 518.0L337.6 518.4" fill="none" stroke="#f5eb46" stroke-width="1.15" stroke-linecap="round" stroke-linejoin="round"/>
<path d="M344.2 523.0L339.2 518.4M342.5 519.0L339.2 518.4L340.1 521.7" fill="none" stroke="#f5eb46" stroke-width="1.15" stroke-linecap="round" stroke-linejoin="round"/>
<path d="M353.7 523.0L349.7 515.0M352.6 516.8L349.7 515.0L349.4 518.4" fill="none" stroke="#f5eb46" stroke-width="1.15" stroke-linecap="round" stroke-linejoin="round"/>
<path d="M363.2 523.0L363.2 513.8M365.0 516.7L363.2 513.8L361.4 516.7" fill="none" stroke="#f5eb46" stroke-width="1.15" stroke-linecap="round" stroke-linejoin="round"/>
<path d="M372.8 523.0L365.8 517.4M369.2 517.8L365.8 517.4L366.9 520.6" fill="none" stroke="#f5eb46" stroke-width="1.15" stroke-linecap="round" stroke-linejoin="round"/>
<path d="M382.3 523.0L375.3 517.8M378.7 518.1L375.3 517.8L376.6 521.0" fill="none" stroke="#f5eb46" stroke-width="1.15" stroke-linecap="round" stroke-linejoin="round"/>
<path d="M391.9 523.0L384.5 519.6M387.9 519.2L384.5 519.6L386.4 522.4" fill="none" stroke="#f5eb46" stroke-width="1.15" stroke-linecap="round" stroke-linejoin="round"/>
<path d="M401.4 523.0L394.8 515.8M398.1 516.7L394.8 515.8L395.5 519.2" fill="none" stroke="#f5eb46" stroke-width="1.15" stroke-linecap="round" stroke-linejoin="round"/>
<path d="M411.0 523.0L405.0 515.8M408.2 516.9L405.0 515.8L405.4 519.2" fill="none" stroke="#f5eb46" stroke-width="1.15" stroke-linecap="round" stroke-linejoin="round"/>
<path d="M420.5 523.0L414.5 516.4M417.8 517.3L414.5 516.4L415.1 519.8" fill="none" stroke="#f5eb46" stroke-width="1.15" stroke-linecap="round" stroke-linejoin="round"/>
<path d="M430.0 523.0L424.0 515.8M427.3 516.9L424.0 515.8L424.5 519.2" fill="none" stroke="#f5eb46" stroke-width="1.15" stroke-linecap="round" stroke-linejoin="round"/>
<path d="M439.6 523.0L433.6 516.4M436.9 517.3L433.6 516.4L434.2 519.8" fill="none" stroke="#f5eb46" stroke-width="1.15" stroke-linecap="round" stroke-linejoin="round"/>
<path d="M449.1 523.0L445.1 515.0M448.0 516.8L445.1 515.0L444.8 518.4" fill="none" stroke="#f5eb46" stroke-width="1.15" stroke-linecap="round" stroke-linejoin="round"/>
<path d="M458.7 523.0L452.1 517.0M455.4 517.6L452.1 517.0L453.0 520.3" fill="none" stroke="#f5eb46" stroke-width="1.15" stroke-linecap="round" stroke-linejoin="round"/>
<path d="M468.2 523.0L462.2 515.8M465.5 516.9L462.2 515.8L462.7 519.2" fill="none" stroke="#f5eb46" stroke-width="1.15" stroke-linecap="round" stroke-linejoin="round"/>
<path d="M477.8 523.0L471.2 517.6M474.6 518.0L471.2 517.6L472.3 520.8" fill="none" stroke="#f5eb46" stroke-width="1.15" stroke-linecap="round" stroke-linejoin="round"/>
<path d="M487.3 523.0L481.1 517.0M484.4 517.7L481.1 517.0L481.9 520.3" fill="none" stroke="#f5eb46" stroke-width="1.15" stroke-linecap="round" stroke-linejoin="round"/>
<path d="M496.9 523.0L491.1 516.4M494.3 517.4L491.1 516.4L491.6 519.8" fill="none" stroke="#f5eb46" stroke-width="1.15" stroke-linecap="round" stroke-linejoin="round"/>
<path d="M506.4 523.0L500.2 516.4M503.5 517.3L500.2 516.4L500.9 519.7" fill="none" stroke="#f5eb46" stroke-width="1.15" stroke-linecap="round" stroke-linejoin="round"/>
<path d="M515.9 523.0L508.7 519.0M512.2 518.8L508.7 519.0L510.4 522.0" fill="none" stroke="#f5eb46" stroke-width="1.15" stroke-linecap="round" stroke-linejoin="round"/>
<path d="M525.5 523.0L518.1 519.4M521.5 519.1L518.1 519.4L519.9 522.3" fill="none" stroke="#f5eb46" stroke-width="1.15" stroke-linecap="round" stroke-linejoin="round"/>
<path d="M535.0 523.0L527.6 519.4M531.0 519.1L527.6 519.4L529.5 522.3" fill="none" stroke="#f5eb46" stroke-width="1.15" stroke-linecap="round" stroke-linejoin="round"/>
<path d="M544.6 523.0L536.8 520.4M540.1 519.6L536.8 520.4L539.0 523.0" fill="none" stroke="#f5eb46" stroke-width="1.15" stroke-linecap="round" stroke-linejoin="round"/>
<path d="M554.1 523.0L545.5 523.0M548.4 521.2L545.5 523.0L548.4 524.8" fill="none" stroke="#f5eb46" stroke-width="1.15" stroke-linecap="round" stroke-linejoin="round"/>
<path d="M563.7 523.0L555.3 522.4M558.3 520.8L555.3 522.4L558.0 524.4" fill="none" stroke="#f5eb46" stroke-width="1.15" stroke-linecap="round" stroke-linejoin="round"/>
<path d="M573.2 523.0L564.8 523.0M567.7 521.2L564.8 523.0L567.7 524.8" fill="none" stroke="#f5eb46" stroke-width="1.15" stroke-linecap="round" stroke-linejoin="round"/>
<path d="M582.8 523.0L574.6 522.4M577.6 520.8L574.6 522.4L577.3 524.4" fill="none" stroke="#f5eb46" stroke-width="1.15" stroke-linecap="round" stroke-linejoin="round"/>
<path d="M592.3 523.0L583.9 523.0M586.8 521.2L583.9 523.0L586.8 524.8" fill="none" stroke="#f5eb46" stroke-width="1.15" stroke-linecap="round" stroke-linejoin="round"/>
<path d="M601.8 523.0L593.6 523.0M596.5 521.2L593.6 523.0L596.5 524.8" fill="none" stroke="#f5eb46" stroke-width="1.15" stroke-linecap="round" stroke-linejoin="round"/>
<path d="M611.4 523.0L603.2 523.0M606.1 521.2L603.2 523.0L606.1 524.8" fill="none" stroke="#f5eb46" stroke-width="1.15" stroke-linecap="round" stroke-linejoin="round"/>
<path d="M620.9 523.0L612.9 523.6M615.7 521.6L612.9 523.6L616.0 525.2" fill="none" stroke="#f5eb46" stroke-width="1.15" stroke-linecap="round" stroke-linejoin="round"/>
<path d="M630.5 523.0L622.9 525.6M625.0 523.0L622.9 525.6L626.2 526.4" fill="none" stroke="#f5eb46" stroke-width="1.15" stroke-linecap="round" stroke-linejoin="round"/>
<path d="M640.0 523.0L632.0 521.5M635.2 520.3L632.0 521.5L634.5 523.8" fill="none" stroke="#f5eb46" stroke-width="1.15" stroke-linecap="round" stroke-linejoin="round"/>
<path d="M649.6 523.0L642.0 519.4M645.4 519.0L642.0 519.4L643.8 522.3" fill="none" stroke="#f5eb46" stroke-width="1.15" stroke-linecap="round" stroke-linejoin="round"/>
<path d="M659.1 523.0L650.4 523.4M653.2 521.5L650.4 523.4L653.4 525.1" fill="none" stroke="#f5eb46" stroke-width="1.15" stroke-linecap="round" stroke-linejoin="round"/>
<path d="M668.6 523.0L661.0 520.0M664.4 519.4L661.0 520.0L663.1 522.7" fill="none" stroke="#f5eb46" stroke-width="1.15" stroke-linecap="round" stroke-linejoin="round"/>
<path d="M678.2 523.0L671.6 516.6M674.9 517.3L671.6 516.6L672.4 519.9" fill="none" stroke="#f5eb46" stroke-width="1.15" stroke-linecap="round" stroke-linejoin="round"/>
<path d="M687.7 523.0L680.7 517.9M684.1 518.2L680.7 517.9L682.0 521.1" fill="none" stroke="#f5eb46" stroke-width="1.15" stroke-linecap="round" stroke-linejoin="round"/>
<path d="M697.3 523.0L690.7 517.3M694.0 517.8L690.7 517.3L691.7 520.6" fill="none" stroke="#f5eb46" stroke-width="1.15" stroke-linecap="round" stroke-linejoin="round"/>
<path d="M706.8 523.0L700.8 516.6M704.1 517.5L700.8 516.6L701.5 519.9" fill="none" stroke="#f5eb46" stroke-width="1.15" stroke-linecap="round" stroke-linejoin="round"/>
<path d="M716.4 523.0L709.0 518.8M712.4 518.7L709.0 518.8L710.6 521.8" fill="none" stroke="#f5eb46" stroke-width="1.15" stroke-linecap="round" stroke-linejoin="round"/>
<path d="M725.9 523.0L717.9 519.4M721.3 519.0L717.9 519.4L719.8 522.2" fill="none" stroke="#f5eb46" stroke-width="1.15" stroke-linecap="round" stroke-linejoin="round"/>
<path d="M735.5 523.0L727.0 522.6M729.9 520.9L727.0 522.6L729.8 524.5" fill="none" stroke="#f5eb46" stroke-width="1.15" stroke-linecap="round" stroke-linejoin="round"/>
<path d="M745.0 523.0L737.1 520.9M740.4 519.9L737.1 520.9L739.4 523.4" fill="none" stroke="#f5eb46" stroke-width="1.15" stroke-linecap="round" stroke-linejoin="round"/>
<path d="M754.5 523.0L750.3 530.6M750.2 527.2L750.3 530.6L753.3 528.9" fill="none" stroke="#f5eb46" stroke-width="1.15" stroke-linecap="round" stroke-linejoin="round"/>
<path d="M764.1 523.0L764.7 530.6M762.7 527.9L764.7 530.6L766.3 527.6" fill="none" stroke="#f5eb46" stroke-width="1.15" stroke-linecap="round" stroke-linejoin="round"/>
<path d="M773.6 523.0L776.4 530.6M773.7 528.5L776.4 530.6L777.1 527.3" fill="none" stroke="#f5eb46" stroke-width="1.15" stroke-linecap="round" stroke-linejoin="round"/>
<path d="M783.2 523.0L785.8 530.6M783.1 528.4L785.8 530.6L786.5 527.3" fill="none" stroke="#f5eb46" stroke-width="1.15" stroke-linecap="round" stroke-linejoin="round"/>
<path d="M792.7 523.0L789.7 530.6M789.1 527.2L789.7 530.6L792.5 528.6" fill="none" stroke="#f5eb46" stroke-width="1.15" stroke-linecap="round" stroke-linejoin="round"/>
</g>
</svg></body></html>
